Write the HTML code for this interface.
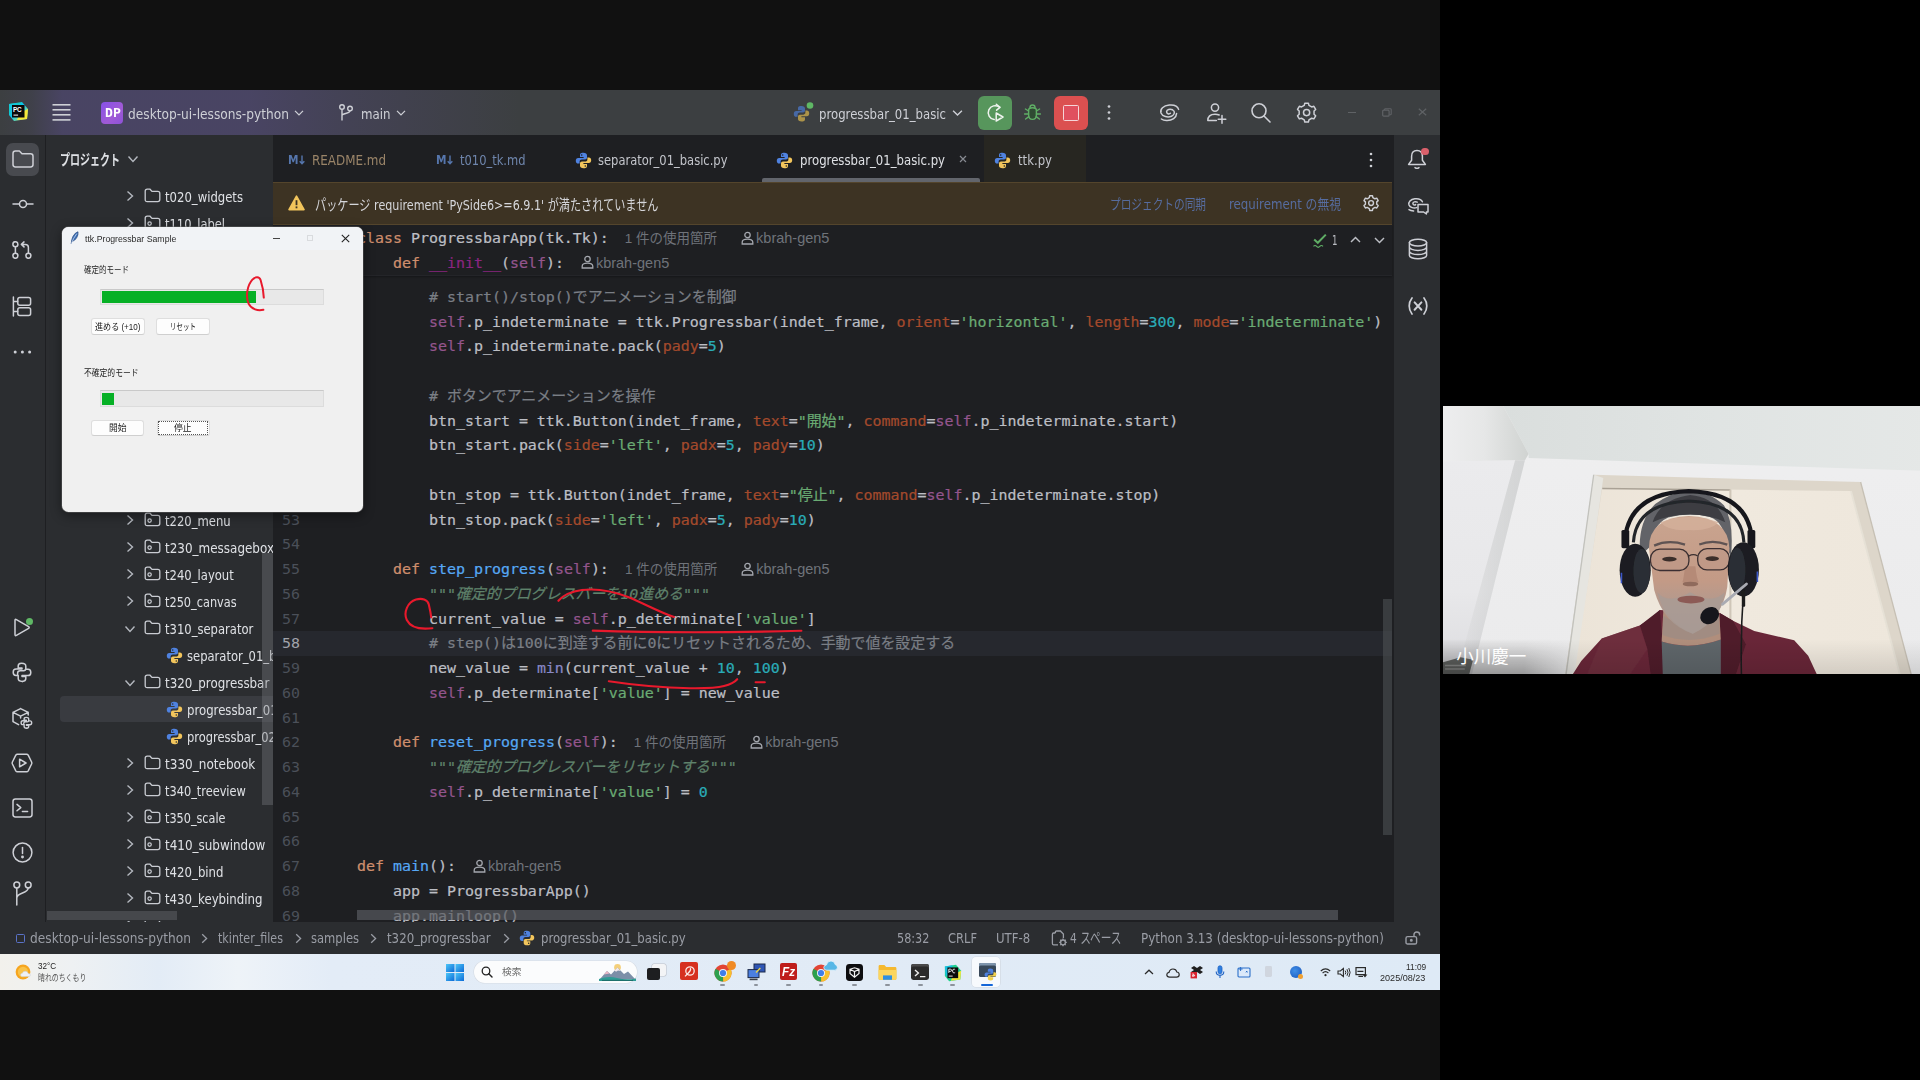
<!DOCTYPE html>
<html lang="ja">
<head>
<meta charset="utf-8">
<title>PyCharm - progressbar_01_basic.py</title>
<style>
html,body{margin:0;padding:0;background:#000;}
body{width:1920px;height:1080px;overflow:hidden;position:relative;font-family:"DejaVu Sans","Liberation Sans","Noto Sans CJK JP",sans-serif;color:#dfe1e5;font-size:14.5px;}
.a{position:absolute;}
.t{position:absolute;white-space:nowrap;line-height:20px;height:20px;}
#screen{position:absolute;left:0;top:90px;width:1440px;height:900px;overflow:hidden;background:#1e1f22;}
/* all children of #screen use coordinates relative to the screen (page y - 90) */
#titlebar{left:0;top:0;width:1440px;height:45px;background:#3c3f41;}
#titlegrad{left:0;top:0;width:520px;height:45px;background:linear-gradient(90deg,rgba(92,76,150,0) 0%,rgba(92,76,150,.1) 6%,rgba(92,76,150,.4) 12%,rgba(92,76,150,.4) 48%,rgba(92,76,150,.22) 68%,rgba(92,76,150,0) 100%);}
#lstripe{left:0;top:45px;width:45px;height:787px;background:#2b2d30;}
#proj{left:46px;top:45px;width:227px;height:787px;background:#2b2d30;overflow:hidden;}
#rstripe{left:1394px;top:45px;width:46px;height:787px;background:#2b2d30;}
#tabs{left:273px;top:45px;width:1121px;height:47px;background:#1e1f22;}
#banner{left:273px;top:92px;width:1119px;height:43px;background:#3d3323;}
#status{left:0;top:832px;width:1440px;height:32px;background:#2b2d30;}
#taskbar{left:0;top:864px;width:1440px;height:36px;background:linear-gradient(90deg,#f2f1ec 0%,#eef1f3 5%,#e3ecf6 11%,#eef3f8 16.5%,#e3ecf7 23%,#e1ebf6 60%,#deeaf6 100%);}
#editor{left:273px;top:135px;width:1119px;height:697px;overflow:hidden;}
#sticky{left:273px;top:135px;width:1119px;height:50px;background:#1e1f22;box-shadow:0 1px 2px rgba(0,0,0,.3);border-bottom:1px solid #242529;overflow:hidden;}
.cl{position:absolute;left:84px;white-space:pre;font-family:"DejaVu Sans Mono","Liberation Mono","Noto Sans CJK JP",monospace;font-size:14.95px;line-height:24.75px;height:24.75px;color:#bcbec4;-webkit-text-stroke:.22px currentColor;}
.ln{position:absolute;left:0;width:27px;text-align:right;font-family:"DejaVu Sans Mono","Liberation Mono",monospace;font-size:14.95px;line-height:24.75px;height:24.75px;color:#4b5059;}
.k{color:#cf8e6d}.f{color:#56a8f5}.s{color:#94558d}.g{color:#6aab73}.n{color:#2aacb8}.p{color:#a44a2c}.c{color:#7a7e85}.d{color:#5f826b;font-style:italic}.b{color:#8888c6}.m{color:#8a2580}
.h{-webkit-text-stroke:0;font-family:"Liberation Sans","Noto Sans CJK JP",sans-serif;font-size:13.5px;color:#6f737a;margin-left:16px;font-style:normal}
.an{font-size:14.5px}
.h svg{vertical-align:-1.5px;margin-right:2px}
.tr{font-size:14.5px;color:#dfe1e5;}

</style>
</head>
<body>
<div class="a" style="left:0;top:0;width:1440px;height:1080px;background:#111"></div>
<div id="screen">
  <div class="a" id="titlebar"></div>
  <div class="a" id="titlegrad"></div>
  <div class="a" id="lstripe"></div>
  <div class="a" id="proj">
<div class="a" style="left:14px;top:560.5px;width:214px;height:26.5px;background:#393b40;border-radius:4px 0 0 4px"></div>
<svg class="a" style="left:79px;top:54.5px" width="10" height="12" viewBox="0 0 10 12"><path d="M2.5 1.5 L7.5 6 L2.5 10.5" fill="none" stroke="#b4b8bf" stroke-width="1.4"/></svg>
<svg class="a" style="left:98px;top:53.4px" width="17" height="15" viewBox="0 0 17 15"><path d="M1.2 3.2 Q1.2 1.2 3.2 1.2 H6 L8 3.4 H13.8 Q15.8 3.4 15.8 5.4 V11.6 Q15.8 13.6 13.8 13.6 H3.2 Q1.2 13.6 1.2 11.6 Z" fill="none" stroke="#c9ccd2" stroke-width="1.3"/></svg>
<div class="t " style="left:119.2px;top:52.0px;font-size:14.5px;color:#dfe1e5;line-height:20px;height:20px;transform:scaleX(0.8035);transform-origin:0 50%;">t020_widgets</div>
<svg class="a" style="left:79px;top:81.5px" width="10" height="12" viewBox="0 0 10 12"><path d="M2.5 1.5 L7.5 6 L2.5 10.5" fill="none" stroke="#b4b8bf" stroke-width="1.4"/></svg>
<svg class="a" style="left:98px;top:80.4px" width="17" height="15" viewBox="0 0 17 15"><path d="M1.2 3.2 Q1.2 1.2 3.2 1.2 H6 L8 3.4 H13.8 Q15.8 3.4 15.8 5.4 V11.6 Q15.8 13.6 13.8 13.6 H3.2 Q1.2 13.6 1.2 11.6 Z" fill="none" stroke="#c9ccd2" stroke-width="1.3"/><circle cx="5.6" cy="8.6" r="1.7" fill="none" stroke="#c9ccd2" stroke-width="1.2"/></svg>
<div class="t " style="left:119.2px;top:79.0px;font-size:14.5px;color:#dfe1e5;line-height:20px;height:20px;transform:scaleX(0.7927);transform-origin:0 50%;">t110_label</div>
<svg class="a" style="left:79px;top:378.5px" width="10" height="12" viewBox="0 0 10 12"><path d="M2.5 1.5 L7.5 6 L2.5 10.5" fill="none" stroke="#b4b8bf" stroke-width="1.4"/></svg>
<svg class="a" style="left:98px;top:377.4px" width="17" height="15" viewBox="0 0 17 15"><path d="M1.2 3.2 Q1.2 1.2 3.2 1.2 H6 L8 3.4 H13.8 Q15.8 3.4 15.8 5.4 V11.6 Q15.8 13.6 13.8 13.6 H3.2 Q1.2 13.6 1.2 11.6 Z" fill="none" stroke="#c9ccd2" stroke-width="1.3"/><circle cx="5.6" cy="8.6" r="1.7" fill="none" stroke="#c9ccd2" stroke-width="1.2"/></svg>
<div class="t " style="left:119.2px;top:376.0px;font-size:14.5px;color:#dfe1e5;line-height:20px;height:20px;transform:scaleX(0.7995);transform-origin:0 50%;">t220_menu</div>
<svg class="a" style="left:79px;top:405.5px" width="10" height="12" viewBox="0 0 10 12"><path d="M2.5 1.5 L7.5 6 L2.5 10.5" fill="none" stroke="#b4b8bf" stroke-width="1.4"/></svg>
<svg class="a" style="left:98px;top:404.4px" width="17" height="15" viewBox="0 0 17 15"><path d="M1.2 3.2 Q1.2 1.2 3.2 1.2 H6 L8 3.4 H13.8 Q15.8 3.4 15.8 5.4 V11.6 Q15.8 13.6 13.8 13.6 H3.2 Q1.2 13.6 1.2 11.6 Z" fill="none" stroke="#c9ccd2" stroke-width="1.3"/><circle cx="5.6" cy="8.6" r="1.7" fill="none" stroke="#c9ccd2" stroke-width="1.2"/></svg>
<div class="t " style="left:119.2px;top:403.0px;font-size:14.5px;color:#dfe1e5;line-height:20px;height:20px;transform:scaleX(0.8258);transform-origin:0 50%;">t230_messagebox</div>
<svg class="a" style="left:79px;top:432.5px" width="10" height="12" viewBox="0 0 10 12"><path d="M2.5 1.5 L7.5 6 L2.5 10.5" fill="none" stroke="#b4b8bf" stroke-width="1.4"/></svg>
<svg class="a" style="left:98px;top:431.4px" width="17" height="15" viewBox="0 0 17 15"><path d="M1.2 3.2 Q1.2 1.2 3.2 1.2 H6 L8 3.4 H13.8 Q15.8 3.4 15.8 5.4 V11.6 Q15.8 13.6 13.8 13.6 H3.2 Q1.2 13.6 1.2 11.6 Z" fill="none" stroke="#c9ccd2" stroke-width="1.3"/><circle cx="5.6" cy="8.6" r="1.7" fill="none" stroke="#c9ccd2" stroke-width="1.2"/></svg>
<div class="t " style="left:119.2px;top:430.0px;font-size:14.5px;color:#dfe1e5;line-height:20px;height:20px;transform:scaleX(0.8013);transform-origin:0 50%;">t240_layout</div>
<svg class="a" style="left:79px;top:459.5px" width="10" height="12" viewBox="0 0 10 12"><path d="M2.5 1.5 L7.5 6 L2.5 10.5" fill="none" stroke="#b4b8bf" stroke-width="1.4"/></svg>
<svg class="a" style="left:98px;top:458.4px" width="17" height="15" viewBox="0 0 17 15"><path d="M1.2 3.2 Q1.2 1.2 3.2 1.2 H6 L8 3.4 H13.8 Q15.8 3.4 15.8 5.4 V11.6 Q15.8 13.6 13.8 13.6 H3.2 Q1.2 13.6 1.2 11.6 Z" fill="none" stroke="#c9ccd2" stroke-width="1.3"/><circle cx="5.6" cy="8.6" r="1.7" fill="none" stroke="#c9ccd2" stroke-width="1.2"/></svg>
<div class="t " style="left:119.2px;top:457.0px;font-size:14.5px;color:#dfe1e5;line-height:20px;height:20px;transform:scaleX(0.7809);transform-origin:0 50%;">t250_canvas</div>
<svg class="a" style="left:78px;top:489.0px" width="12" height="10" viewBox="0 0 12 10"><path d="M1.5 2.5 L6 7.5 L10.5 2.5" fill="none" stroke="#b4b8bf" stroke-width="1.4"/></svg>
<svg class="a" style="left:98px;top:485.4px" width="17" height="15" viewBox="0 0 17 15"><path d="M1.2 3.2 Q1.2 1.2 3.2 1.2 H6 L8 3.4 H13.8 Q15.8 3.4 15.8 5.4 V11.6 Q15.8 13.6 13.8 13.6 H3.2 Q1.2 13.6 1.2 11.6 Z" fill="none" stroke="#c9ccd2" stroke-width="1.3"/></svg>
<div class="t " style="left:119.2px;top:484.0px;font-size:14.5px;color:#dfe1e5;line-height:20px;height:20px;transform:scaleX(0.7988);transform-origin:0 50%;">t310_separator</div>
<svg class="a" style="left:120px;top:511.5px" width="17" height="17" viewBox="0 0 17 17"><path d="M8.3 0.8 C5.2 0.8 5 2.2 5 3.3 V5 H8.6 V5.9 H3.2 C1.6 5.9 0.8 7.2 0.8 8.7 C0.8 10.4 1.6 11.6 3.2 11.6 H4.6 V9.6 C4.6 8.3 5.6 7.4 6.9 7.4 H10 C11.2 7.4 12 6.6 12 5.4 V3.3 C12 1.8 10.8 0.8 8.3 0.8 Z" fill="#4f82e0"/><path d="M8.7 16.2 C11.8 16.2 12 14.8 12 13.7 V12 H8.4 V11.1 H13.8 C15.4 11.1 16.2 9.8 16.2 8.3 C16.2 6.6 15.4 5.4 13.8 5.4 H12.4 V7.4 C12.4 8.7 11.4 9.6 10.1 9.6 H7 C5.8 9.6 5 10.4 5 11.6 V13.7 C5 15.2 6.2 16.2 8.7 16.2 Z" fill="#f2c55c"/><circle cx="6.7" cy="3" r=".8" fill="#2b2d30"/><circle cx="10.3" cy="14" r=".8" fill="#2b2d30"/></svg>
<div class="t " style="left:140.8px;top:511.0px;font-size:14.5px;color:#dfe1e5;line-height:20px;height:20px;transform:scaleX(0.7979);transform-origin:0 50%;">separator_01_basic.py</div>
<svg class="a" style="left:78px;top:543.0px" width="12" height="10" viewBox="0 0 12 10"><path d="M1.5 2.5 L6 7.5 L10.5 2.5" fill="none" stroke="#b4b8bf" stroke-width="1.4"/></svg>
<svg class="a" style="left:98px;top:539.4px" width="17" height="15" viewBox="0 0 17 15"><path d="M1.2 3.2 Q1.2 1.2 3.2 1.2 H6 L8 3.4 H13.8 Q15.8 3.4 15.8 5.4 V11.6 Q15.8 13.6 13.8 13.6 H3.2 Q1.2 13.6 1.2 11.6 Z" fill="none" stroke="#c9ccd2" stroke-width="1.3"/></svg>
<div class="t " style="left:119.2px;top:538.0px;font-size:14.5px;color:#dfe1e5;line-height:20px;height:20px;transform:scaleX(0.8195);transform-origin:0 50%;">t320_progressbar</div>
<svg class="a" style="left:120px;top:565.5px" width="17" height="17" viewBox="0 0 17 17"><path d="M8.3 0.8 C5.2 0.8 5 2.2 5 3.3 V5 H8.6 V5.9 H3.2 C1.6 5.9 0.8 7.2 0.8 8.7 C0.8 10.4 1.6 11.6 3.2 11.6 H4.6 V9.6 C4.6 8.3 5.6 7.4 6.9 7.4 H10 C11.2 7.4 12 6.6 12 5.4 V3.3 C12 1.8 10.8 0.8 8.3 0.8 Z" fill="#4f82e0"/><path d="M8.7 16.2 C11.8 16.2 12 14.8 12 13.7 V12 H8.4 V11.1 H13.8 C15.4 11.1 16.2 9.8 16.2 8.3 C16.2 6.6 15.4 5.4 13.8 5.4 H12.4 V7.4 C12.4 8.7 11.4 9.6 10.1 9.6 H7 C5.8 9.6 5 10.4 5 11.6 V13.7 C5 15.2 6.2 16.2 8.7 16.2 Z" fill="#f2c55c"/><circle cx="6.7" cy="3" r=".8" fill="#2b2d30"/><circle cx="10.3" cy="14" r=".8" fill="#2b2d30"/></svg>
<div class="t " style="left:140.8px;top:565.0px;font-size:14.5px;color:#dfe1e5;line-height:20px;height:20px;transform:scaleX(0.8072);transform-origin:0 50%;">progressbar_01_basic.py</div>
<svg class="a" style="left:120px;top:592.5px" width="17" height="17" viewBox="0 0 17 17"><path d="M8.3 0.8 C5.2 0.8 5 2.2 5 3.3 V5 H8.6 V5.9 H3.2 C1.6 5.9 0.8 7.2 0.8 8.7 C0.8 10.4 1.6 11.6 3.2 11.6 H4.6 V9.6 C4.6 8.3 5.6 7.4 6.9 7.4 H10 C11.2 7.4 12 6.6 12 5.4 V3.3 C12 1.8 10.8 0.8 8.3 0.8 Z" fill="#4f82e0"/><path d="M8.7 16.2 C11.8 16.2 12 14.8 12 13.7 V12 H8.4 V11.1 H13.8 C15.4 11.1 16.2 9.8 16.2 8.3 C16.2 6.6 15.4 5.4 13.8 5.4 H12.4 V7.4 C12.4 8.7 11.4 9.6 10.1 9.6 H7 C5.8 9.6 5 10.4 5 11.6 V13.7 C5 15.2 6.2 16.2 8.7 16.2 Z" fill="#f2c55c"/><circle cx="6.7" cy="3" r=".8" fill="#2b2d30"/><circle cx="10.3" cy="14" r=".8" fill="#2b2d30"/></svg>
<div class="t " style="left:140.8px;top:592.0px;font-size:14.5px;color:#dfe1e5;line-height:20px;height:20px;transform:scaleX(0.7914);transform-origin:0 50%;">progressbar_02_thread.py</div>
<svg class="a" style="left:79px;top:621.5px" width="10" height="12" viewBox="0 0 10 12"><path d="M2.5 1.5 L7.5 6 L2.5 10.5" fill="none" stroke="#b4b8bf" stroke-width="1.4"/></svg>
<svg class="a" style="left:98px;top:620.4px" width="17" height="15" viewBox="0 0 17 15"><path d="M1.2 3.2 Q1.2 1.2 3.2 1.2 H6 L8 3.4 H13.8 Q15.8 3.4 15.8 5.4 V11.6 Q15.8 13.6 13.8 13.6 H3.2 Q1.2 13.6 1.2 11.6 Z" fill="none" stroke="#c9ccd2" stroke-width="1.3"/></svg>
<div class="t " style="left:119.2px;top:619.0px;font-size:14.5px;color:#dfe1e5;line-height:20px;height:20px;transform:scaleX(0.8313);transform-origin:0 50%;">t330_notebook</div>
<svg class="a" style="left:79px;top:648.5px" width="10" height="12" viewBox="0 0 10 12"><path d="M2.5 1.5 L7.5 6 L2.5 10.5" fill="none" stroke="#b4b8bf" stroke-width="1.4"/></svg>
<svg class="a" style="left:98px;top:647.4px" width="17" height="15" viewBox="0 0 17 15"><path d="M1.2 3.2 Q1.2 1.2 3.2 1.2 H6 L8 3.4 H13.8 Q15.8 3.4 15.8 5.4 V11.6 Q15.8 13.6 13.8 13.6 H3.2 Q1.2 13.6 1.2 11.6 Z" fill="none" stroke="#c9ccd2" stroke-width="1.3"/></svg>
<div class="t " style="left:119.2px;top:646.0px;font-size:14.5px;color:#dfe1e5;line-height:20px;height:20px;transform:scaleX(0.7832);transform-origin:0 50%;">t340_treeview</div>
<svg class="a" style="left:79px;top:675.5px" width="10" height="12" viewBox="0 0 10 12"><path d="M2.5 1.5 L7.5 6 L2.5 10.5" fill="none" stroke="#b4b8bf" stroke-width="1.4"/></svg>
<svg class="a" style="left:98px;top:674.4px" width="17" height="15" viewBox="0 0 17 15"><path d="M1.2 3.2 Q1.2 1.2 3.2 1.2 H6 L8 3.4 H13.8 Q15.8 3.4 15.8 5.4 V11.6 Q15.8 13.6 13.8 13.6 H3.2 Q1.2 13.6 1.2 11.6 Z" fill="none" stroke="#c9ccd2" stroke-width="1.3"/><circle cx="5.6" cy="8.6" r="1.7" fill="none" stroke="#c9ccd2" stroke-width="1.2"/></svg>
<div class="t " style="left:119.2px;top:673.0px;font-size:14.5px;color:#dfe1e5;line-height:20px;height:20px;transform:scaleX(0.7758);transform-origin:0 50%;">t350_scale</div>
<svg class="a" style="left:79px;top:702.5px" width="10" height="12" viewBox="0 0 10 12"><path d="M2.5 1.5 L7.5 6 L2.5 10.5" fill="none" stroke="#b4b8bf" stroke-width="1.4"/></svg>
<svg class="a" style="left:98px;top:701.4px" width="17" height="15" viewBox="0 0 17 15"><path d="M1.2 3.2 Q1.2 1.2 3.2 1.2 H6 L8 3.4 H13.8 Q15.8 3.4 15.8 5.4 V11.6 Q15.8 13.6 13.8 13.6 H3.2 Q1.2 13.6 1.2 11.6 Z" fill="none" stroke="#c9ccd2" stroke-width="1.3"/><circle cx="5.6" cy="8.6" r="1.7" fill="none" stroke="#c9ccd2" stroke-width="1.2"/></svg>
<div class="t " style="left:119.2px;top:700.0px;font-size:14.5px;color:#dfe1e5;line-height:20px;height:20px;transform:scaleX(0.8250);transform-origin:0 50%;">t410_subwindow</div>
<svg class="a" style="left:79px;top:729.5px" width="10" height="12" viewBox="0 0 10 12"><path d="M2.5 1.5 L7.5 6 L2.5 10.5" fill="none" stroke="#b4b8bf" stroke-width="1.4"/></svg>
<svg class="a" style="left:98px;top:728.4px" width="17" height="15" viewBox="0 0 17 15"><path d="M1.2 3.2 Q1.2 1.2 3.2 1.2 H6 L8 3.4 H13.8 Q15.8 3.4 15.8 5.4 V11.6 Q15.8 13.6 13.8 13.6 H3.2 Q1.2 13.6 1.2 11.6 Z" fill="none" stroke="#c9ccd2" stroke-width="1.3"/><circle cx="5.6" cy="8.6" r="1.7" fill="none" stroke="#c9ccd2" stroke-width="1.2"/></svg>
<div class="t " style="left:119.2px;top:727.0px;font-size:14.5px;color:#dfe1e5;line-height:20px;height:20px;transform:scaleX(0.8097);transform-origin:0 50%;">t420_bind</div>
<svg class="a" style="left:79px;top:756.5px" width="10" height="12" viewBox="0 0 10 12"><path d="M2.5 1.5 L7.5 6 L2.5 10.5" fill="none" stroke="#b4b8bf" stroke-width="1.4"/></svg>
<svg class="a" style="left:98px;top:755.4px" width="17" height="15" viewBox="0 0 17 15"><path d="M1.2 3.2 Q1.2 1.2 3.2 1.2 H6 L8 3.4 H13.8 Q15.8 3.4 15.8 5.4 V11.6 Q15.8 13.6 13.8 13.6 H3.2 Q1.2 13.6 1.2 11.6 Z" fill="none" stroke="#c9ccd2" stroke-width="1.3"/><circle cx="5.6" cy="8.6" r="1.7" fill="none" stroke="#c9ccd2" stroke-width="1.2"/></svg>
<div class="t " style="left:119.2px;top:754.0px;font-size:14.5px;color:#dfe1e5;line-height:20px;height:20px;transform:scaleX(0.8122);transform-origin:0 50%;">t430_keybinding</div>
<svg class="a" style="left:79px;top:783.5px" width="10" height="12" viewBox="0 0 10 12"><path d="M2.5 1.5 L7.5 6 L2.5 10.5" fill="none" stroke="#b4b8bf" stroke-width="1.4"/></svg>
<svg class="a" style="left:98px;top:782.4px" width="17" height="15" viewBox="0 0 17 15"><path d="M1.2 3.2 Q1.2 1.2 3.2 1.2 H6 L8 3.4 H13.8 Q15.8 3.4 15.8 5.4 V11.6 Q15.8 13.6 13.8 13.6 H3.2 Q1.2 13.6 1.2 11.6 Z" fill="none" stroke="#c9ccd2" stroke-width="1.3"/><circle cx="5.6" cy="8.6" r="1.7" fill="none" stroke="#c9ccd2" stroke-width="1.2"/></svg>
<div class="a" style="left:216px;top:418px;width:11px;height:252px;background:rgba(120,124,130,.38)"></div>
<div class="a" style="left:0;top:774px;width:227px;height:12px;background:#2b2d30"></div>
<div class="a" style="left:1px;top:776px;width:130px;height:9px;background:#46484c"></div>
<div class="a" style="left:0;top:0;width:227px;height:47px;background:#2b2d30"></div>
<div class="t " style="left:14.0px;top:14.7px;font-size:14.5px;color:#dfe1e5;line-height:20px;height:20px;font-weight:700;transform:scaleX(0.6897);transform-origin:0 50%;">プロジェクト</div>
<svg class="a" style="left:81px;top:19px" width="12" height="10" viewBox="0 0 12 10"><path d="M1.5 2.5 L6 7.5 L10.5 2.5" fill="none" stroke="#b4b8bf" stroke-width="1.4"/></svg>
</div>
  <div class="a" id="tabs"></div>
  <div class="a" id="banner"></div>
  <div class="a" id="rstripe"></div>
  <div class="a" id="editor">
<div class="a" style="left:0;top:406.33px;width:1119px;height:24.75px;background:#26282e"></div>
<div class="ln" style="top:59.82px">44</div>
<div class="cl" style="top:59.82px">        <span class="c"># start()/stop()でアニメーションを制御</span></div>
<div class="ln" style="top:84.57px">45</div>
<div class="cl" style="top:84.57px">        <span class="s">self</span>.p_indeterminate = ttk.Progressbar(indet_frame, <span class="p">orient</span>=<span class="g">'horizontal'</span>, <span class="p">length</span>=<span class="n">300</span>, <span class="p">mode</span>=<span class="g">'indeterminate'</span>)</div>
<div class="ln" style="top:109.32px">46</div>
<div class="cl" style="top:109.32px">        <span class="s">self</span>.p_indeterminate.pack(<span class="p">pady</span>=<span class="n">5</span>)</div>
<div class="ln" style="top:134.07px">47</div>
<div class="ln" style="top:158.82px">48</div>
<div class="cl" style="top:158.82px">        <span class="c"># ボタンでアニメーションを操作</span></div>
<div class="ln" style="top:183.57px">49</div>
<div class="cl" style="top:183.57px">        btn_start = ttk.Button(indet_frame, <span class="p">text</span>=<span class="g">"開始"</span>, <span class="p">command</span>=<span class="s">self</span>.p_indeterminate.start)</div>
<div class="ln" style="top:208.32px">50</div>
<div class="cl" style="top:208.32px">        btn_start.pack(<span class="p">side</span>=<span class="g">'left'</span>, <span class="p">padx</span>=<span class="n">5</span>, <span class="p">pady</span>=<span class="n">10</span>)</div>
<div class="ln" style="top:233.07px">51</div>
<div class="ln" style="top:257.82px">52</div>
<div class="cl" style="top:257.82px">        btn_stop = ttk.Button(indet_frame, <span class="p">text</span>=<span class="g">"停止"</span>, <span class="p">command</span>=<span class="s">self</span>.p_indeterminate.stop)</div>
<div class="ln" style="top:282.57px">53</div>
<div class="cl" style="top:282.57px">        btn_stop.pack(<span class="p">side</span>=<span class="g">'left'</span>, <span class="p">padx</span>=<span class="n">5</span>, <span class="p">pady</span>=<span class="n">10</span>)</div>
<div class="ln" style="top:307.32px">54</div>
<div class="ln" style="top:332.07px">55</div>
<div class="cl" style="top:332.07px">    <span class="k">def</span> <span class="f">step_progress</span>(<span class="s">self</span>):<span class="h">1 件の使用箇所</span><span class="h au" style="margin-left:24px"><svg class="ui" width="13" height="14" viewBox="0 0 13 14"><circle cx="6.5" cy="4" r="2.7" fill="none" stroke="#a4a7ae" stroke-width="1.3"/><path d="M1.2 13 V11.2 C1.2 8.8 3.4 8.2 6.5 8.2 S11.8 8.8 11.8 11.2 V13 Z" fill="none" stroke="#a4a7ae" stroke-width="1.3"/></svg><span class="an">kbrah-gen5</span></span></div>
<div class="ln" style="top:356.82px">56</div>
<div class="cl" style="top:356.82px">        <span class="d">"""確定的プログレスバーを10進める"""</span></div>
<div class="ln" style="top:381.58px">57</div>
<div class="cl" style="top:381.58px">        current_value = <span class="s">self</span>.p_determinate[<span class="g">'value'</span>]</div>
<div class="ln" style="top:406.33px;color:#a1a3ab">58</div>
<div class="cl" style="top:406.33px">        <span class="c"># step()は100に到達する前に0にリセットされるため、手動で値を設定する</span></div>
<div class="ln" style="top:431.08px">59</div>
<div class="cl" style="top:431.08px">        new_value = <span class="b">min</span>(current_value + <span class="n">10</span>, <span class="n">100</span>)</div>
<div class="ln" style="top:455.83px">60</div>
<div class="cl" style="top:455.83px">        <span class="s">self</span>.p_determinate[<span class="g">'value'</span>] = new_value</div>
<div class="ln" style="top:480.58px">61</div>
<div class="ln" style="top:505.33px">62</div>
<div class="cl" style="top:505.33px">    <span class="k">def</span> <span class="f">reset_progress</span>(<span class="s">self</span>):<span class="h">1 件の使用箇所</span><span class="h au" style="margin-left:24px"><svg class="ui" width="13" height="14" viewBox="0 0 13 14"><circle cx="6.5" cy="4" r="2.7" fill="none" stroke="#a4a7ae" stroke-width="1.3"/><path d="M1.2 13 V11.2 C1.2 8.8 3.4 8.2 6.5 8.2 S11.8 8.8 11.8 11.2 V13 Z" fill="none" stroke="#a4a7ae" stroke-width="1.3"/></svg><span class="an">kbrah-gen5</span></span></div>
<div class="ln" style="top:530.08px">63</div>
<div class="cl" style="top:530.08px">        <span class="d">"""確定的プログレスバーをリセットする"""</span></div>
<div class="ln" style="top:554.83px">64</div>
<div class="cl" style="top:554.83px">        <span class="s">self</span>.p_determinate[<span class="g">'value'</span>] = <span class="n">0</span></div>
<div class="ln" style="top:579.58px">65</div>
<div class="ln" style="top:604.33px">66</div>
<div class="ln" style="top:629.08px">67</div>
<div class="cl" style="top:629.08px"><span class="k">def</span> <span class="f">main</span>():<span class="h au" style="margin-left:17px"><svg class="ui" width="13" height="14" viewBox="0 0 13 14"><circle cx="6.5" cy="4" r="2.7" fill="none" stroke="#a4a7ae" stroke-width="1.3"/><path d="M1.2 13 V11.2 C1.2 8.8 3.4 8.2 6.5 8.2 S11.8 8.8 11.8 11.2 V13 Z" fill="none" stroke="#a4a7ae" stroke-width="1.3"/></svg><span class="an">kbrah-gen5</span></span></div>
<div class="ln" style="top:653.83px">68</div>
<div class="cl" style="top:653.83px">    app = ProgressbarApp()</div>
<div class="ln" style="top:678.58px">69</div>
<div class="cl" style="top:678.58px">    app.mainloop()</div>
<div class="a" style="left:84px;top:685.0px;width:981px;height:9.5px;background:rgba(86,89,94,.72)"></div>
<div class="a" style="left:1110px;top:374.0px;width:9px;height:236.0px;background:rgba(80,83,88,.55)"></div>
</div>
<div class="a" id="sticky">
<div class="cl" style="top:1.1px"><span class="k">class</span> ProgressbarApp(tk.Tk):<span class="h">1 件の使用箇所</span><span class="h au" style="margin-left:24px"><svg class="ui" width="13" height="14" viewBox="0 0 13 14"><circle cx="6.5" cy="4" r="2.7" fill="none" stroke="#a4a7ae" stroke-width="1.3"/><path d="M1.2 13 V11.2 C1.2 8.8 3.4 8.2 6.5 8.2 S11.8 8.8 11.8 11.2 V13 Z" fill="none" stroke="#a4a7ae" stroke-width="1.3"/></svg><span class="an">kbrah-gen5</span></span></div>
<div class="cl" style="top:25.8px">    <span class="k">def</span> <span class="m">__init__</span>(<span class="s">self</span>):<span class="h au" style="margin-left:17px"><svg class="ui" width="13" height="14" viewBox="0 0 13 14"><circle cx="6.5" cy="4" r="2.7" fill="none" stroke="#a4a7ae" stroke-width="1.3"/><path d="M1.2 13 V11.2 C1.2 8.8 3.4 8.2 6.5 8.2 S11.8 8.8 11.8 11.2 V13 Z" fill="none" stroke="#a4a7ae" stroke-width="1.3"/></svg><span class="an">kbrah-gen5</span></span></div>
</div>
  <svg class="a" style="left:8px;top:11px" width="21" height="21" viewBox="0 0 21 21"><defs><linearGradient id="pcg" x1="0" y1="0" x2="1" y2="1"><stop offset="0" stop-color="#21d789"/><stop offset=".45" stop-color="#07c3f2"/><stop offset="1" stop-color="#fcf84a"/></linearGradient></defs><path d="M1 3 L14 1 L20 8 L19 18 L6 20 L1 14 Z" fill="url(#pcg)"/><path d="M12 12 L20 8 L19 18 L9 19 Z" fill="#f6e83a"/><path d="M1 3 L9 2 L8 12 L2 14Z" fill="#14c6dc"/><rect x="4" y="4" width="12.5" height="12.5" fill="#0b0b0b"/><rect x="5.5" y="13.6" width="4.6" height="1" fill="#fff"/><text x="5.1" y="11" font-family="'Liberation Sans',sans-serif" font-size="6.4" font-weight="700" fill="#fff" letter-spacing="-.3">PC</text></svg>
<svg class="a" style="left:52px;top:13px" width="19" height="19" viewBox="0 0 19 19"><rect x="0.5" y="1.00" width="18" height="1.6" fill="#ced0d6"/><rect x="0.5" y="6.00" width="18" height="1.6" fill="#ced0d6"/><rect x="0.5" y="11.00" width="18" height="1.6" fill="#ced0d6"/><rect x="0.5" y="16.10" width="18" height="1.6" fill="#ced0d6"/></svg>
<div class="a" style="left:101px;top:11.5px;width:22px;height:22px;border-radius:4px;background:linear-gradient(135deg,#8652e8,#a05ad6 60%,#8d52d8)"></div>
<div class="t " style="left:104.6px;top:12.8px;font-size:12.5px;color:#ffffff;line-height:20px;height:20px;font-weight:700;font-family:'DejaVu Sans Mono','Liberation Mono',monospace;transform:scaleX(1.0490);transform-origin:0 50%;">DP</div>
<div class="t " style="left:128.0px;top:13.6px;font-size:14.5px;color:#ced0d6;line-height:20px;height:20px;transform:scaleX(0.8422);transform-origin:0 50%;">desktop-ui-lessons-python</div>
<svg class="a" style="left:294.0px;top:19.0px" width="10" height="8" viewBox="0 0 12 8"><path d="M1.2 1.5 L6 6.3 L10.8 1.5" fill="none" stroke="#ced0d6" stroke-width="1.5"/></svg>
<svg class="a" style="left:338px;top:13px" width="16" height="19" viewBox="0 0 16 19"><circle cx="4" cy="4" r="2.3" fill="none" stroke="#ced0d6" stroke-width="1.4"/><circle cx="12" cy="5.5" r="2.3" fill="none" stroke="#ced0d6" stroke-width="1.4"/><path d="M4 6.3 V17.5 M4 12.5 C4 10 12 11 12 7.8" fill="none" stroke="#ced0d6" stroke-width="1.4"/></svg>
<div class="t " style="left:361.0px;top:13.6px;font-size:14.5px;color:#ced0d6;line-height:20px;height:20px;transform:scaleX(0.8141);transform-origin:0 50%;">main</div>
<svg class="a" style="left:396.0px;top:19.0px" width="10" height="8" viewBox="0 0 12 8"><path d="M1.2 1.5 L6 6.3 L10.8 1.5" fill="none" stroke="#ced0d6" stroke-width="1.5"/></svg>
<svg class="a" style="left:792px;top:11px" width="23" height="24" viewBox="0 0 23 24"><g opacity=".8"><path d="M9.3 5 C6.2 5 6 6.4 6 7.5 V9.2 H9.6 V10.1 H4.2 C2.6 10.1 1.8 11.4 1.8 12.9 C1.8 14.6 2.6 15.8 4.2 15.8 H5.6 V13.8 C5.6 12.5 6.6 11.6 7.9 11.6 H11 C12.2 11.6 13 10.8 13 9.6 V7.5 C13 6 11.8 5 9.3 5 Z" fill="#4a74c0"/><path d="M9.7 20.4 C12.8 20.4 13 19 13 17.9 V16.2 H9.4 V15.3 H14.8 C16.4 15.3 17.2 14 17.2 12.5 C17.2 10.8 16.4 9.6 14.8 9.6 H13.4 V11.6 C13.4 12.9 12.4 13.8 11.1 13.8 H8 C6.8 13.8 6 14.6 6 15.8 V17.9 C6 19.4 7.2 20.4 9.7 20.4 Z" fill="#c9a94c"/></g><circle cx="18" cy="4.5" r="3.3" fill="#5fb865"/></svg>
<div class="t " style="left:819.4px;top:13.6px;font-size:14.5px;color:#ced0d6;line-height:20px;height:20px;transform:scaleX(0.8076);transform-origin:0 50%;">progressbar_01_basic</div>
<svg class="a" style="left:952.0px;top:19.0px" width="11" height="8" viewBox="0 0 12 8"><path d="M1.2 1.5 L6 6.3 L10.8 1.5" fill="none" stroke="#ced0d6" stroke-width="1.5"/></svg>
<div class="a" style="left:978px;top:6px;width:34px;height:34px;border-radius:6px;background:#57965c"></div>
<svg class="a" style="left:984px;top:12px" width="22" height="22" viewBox="0 0 22 22"><path d="M15.6 5.2 A7 7 0 1 0 10.2 17.6" fill="none" stroke="#eef3ee" stroke-width="1.5" stroke-linecap="round"/><path d="M12.3 2.2 L16 5.4 L12.6 8.2" fill="none" stroke="#eef3ee" stroke-width="1.5" stroke-linecap="round" stroke-linejoin="round"/><path d="M12.2 11 L19 15 L12.2 19 Z" fill="none" stroke="#eef3ee" stroke-width="1.5" stroke-linejoin="round"/></svg>
<svg class="a" style="left:1023px;top:13px" width="19" height="19" viewBox="0 0 19 19"><path d="M5.6 7.2 Q5.6 4.8 9.5 4.8 Q13.4 4.8 13.4 7.2 V11.8 Q13.4 16.4 9.5 16.4 Q5.6 16.4 5.6 11.8 Z" fill="#2f4a33" stroke="#5fad65" stroke-width="1.4"/><path d="M7 4.6 Q7 2 9.5 2 Q12 2 12 4.6 M5.6 8 L2.4 6 M5.6 11 H1.6 M5.8 13.6 L2.6 16 M13.4 8 L16.6 6 M13.4 11 H17.4 M13.2 13.6 L16.4 16" fill="none" stroke="#5fad65" stroke-width="1.4" stroke-linecap="round"/></svg>
<div class="a" style="left:1054px;top:6px;width:34px;height:34px;border-radius:6px;background:#db5050"></div>
<div class="a" style="left:1062.5px;top:14.5px;width:14px;height:14px;border:1.6px solid #f5d5d8;border-radius:1.5px;background:#e0505f"></div>
<svg class="a" style="left:1106px;top:13px" width="6" height="19" viewBox="0 0 6 19"><circle cx="3" cy="3.5" r="1.35" fill="#ced0d6"/><circle cx="3" cy="9.5" r="1.35" fill="#ced0d6"/><circle cx="3" cy="15.5" r="1.35" fill="#ced0d6"/></svg>
<svg class="a" style="left:1159px;top:12.5px" width="21" height="20" viewBox="0 0 21 20"><path d="M11.4 10.3 C10 11.6 7.4 10.6 7.6 8.6 C7.8 6.6 11 5.6 13.6 6.8 C16.4 8.2 15.8 11.8 12.6 13.2 C8.8 14.8 3.4 13.6 2 10 C0.8 6.2 4.4 2.6 10.2 2 C14.6 1.6 18.6 3 19.6 6.4 M17.6 10.4 C17.4 14.6 13.2 17.8 7.6 17.6 C5.4 17.5 3.6 16.9 2.4 16" fill="none" stroke="#ced0d6" stroke-width="1.5" stroke-linecap="round"/></svg>
<svg class="a" style="left:1206px;top:11.5px" width="22" height="23" viewBox="0 0 22 23"><circle cx="9" cy="5.6" r="3.6" fill="none" stroke="#ced0d6" stroke-width="1.5"/><path d="M1.8 18.6 C1.8 13.6 5 12.2 9 12.2 C10.6 12.2 12 12.5 13.2 13 M1.8 18.6 H10.4 M16 13.4 V21.2 M12.2 17.3 H19.8" fill="none" stroke="#ced0d6" stroke-width="1.5" stroke-linecap="round"/></svg>
<svg class="a" style="left:1250px;top:12px" width="22" height="22" viewBox="0 0 22 22"><circle cx="9" cy="8.8" r="7" fill="none" stroke="#ced0d6" stroke-width="1.6"/><path d="M14 14 L20 20" stroke="#ced0d6" stroke-width="1.6" stroke-linecap="round"/></svg>
<svg class="a" style="left:1295px;top:11px" width="23" height="23" viewBox="0 0 23 23"><path d="M9.25 4.37 L9.80 2.17 L13.40 2.17 L13.95 4.37 L16.69 5.95 L18.87 5.33 L20.67 8.44 L19.03 10.02 L19.03 13.18 L20.67 14.76 L18.87 17.87 L16.69 17.25 L13.95 18.83 L13.40 21.03 L9.80 21.03 L9.25 18.83 L6.51 17.25 L4.33 17.87 L2.53 14.76 L4.17 13.18 L4.17 10.02 L2.53 8.44 L4.33 5.33 L6.51 5.95 Z" fill="none" stroke="#ced0d6" stroke-width="1.5" stroke-linejoin="round"/><circle cx="11.6" cy="11.6" r="3.1" fill="none" stroke="#ced0d6" stroke-width="1.5"/></svg>
<div class="a" style="left:1347.5px;top:22px;width:8px;height:1.3px;background:#5f6265"></div>
<svg class="a" style="left:1382px;top:18px" width="10" height="9" viewBox="0 0 10 9"><rect x=".7" y="2.2" width="6.4" height="6" rx="1" fill="none" stroke="#5f6265" stroke-width="1.2"/><path d="M2.6 2 V1.4 Q2.6 .7 3.4 .7 H8.4 Q9.2 .7 9.2 1.5 V6 Q9.2 6.7 8.4 6.7 H7.4" fill="none" stroke="#5f6265" stroke-width="1.1"/></svg>
<svg class="a" style="left:1417.5px;top:18px" width="9" height="8" viewBox="0 0 9 8"><path d="M.8 .8 L8.2 7.2 M8.2 .8 L.8 7.2" stroke="#5f6265" stroke-width="1.2"/></svg>
  <div class="a" style="left:984px;top:45px;width:102px;height:47px;background:#272621"></div>
<div class="t " style="left:287.5px;top:59.5px;font-size:12px;color:#5676ad;line-height:20px;height:20px;font-weight:700;transform:scaleX(0.8784);transform-origin:0 50%;">M</div><svg class="a" style="left:299.0px;top:64.5px" width="6" height="10" viewBox="0 0 6 10"><path d="M3 .5 V8.6 M.7 6.2 L3 8.8 L5.3 6.2" fill="none" stroke="#5676ad" stroke-width="1.4"/></svg>
<div class="t " style="left:312.0px;top:60.3px;font-size:14.5px;color:#9a8468;line-height:20px;height:20px;transform:scaleX(0.8228);transform-origin:0 50%;">README.md</div>
<div class="t " style="left:435.5px;top:59.5px;font-size:12px;color:#5676ad;line-height:20px;height:20px;font-weight:700;transform:scaleX(0.8784);transform-origin:0 50%;">M</div><svg class="a" style="left:447.0px;top:64.5px" width="6" height="10" viewBox="0 0 6 10"><path d="M3 .5 V8.6 M.7 6.2 L3 8.8 L5.3 6.2" fill="none" stroke="#5676ad" stroke-width="1.4"/></svg>
<div class="t " style="left:459.5px;top:60.3px;font-size:14.5px;color:#6f86ad;line-height:20px;height:20px;transform:scaleX(0.7926);transform-origin:0 50%;">t010_tk.md</div>
<svg class="a" style="left:574.5px;top:61.5px;opacity:1" width="17" height="17" viewBox="0 0 17 17"><path d="M8.3 0.8 C5.2 0.8 5 2.2 5 3.3 V5 H8.6 V5.9 H3.2 C1.6 5.9 0.8 7.2 0.8 8.7 C0.8 10.4 1.6 11.6 3.2 11.6 H4.6 V9.6 C4.6 8.3 5.6 7.4 6.9 7.4 H10 C11.2 7.4 12 6.6 12 5.4 V3.3 C12 1.8 10.8 0.8 8.3 0.8 Z" fill="#4f82e0"/><path d="M8.7 16.2 C11.8 16.2 12 14.8 12 13.7 V12 H8.4 V11.1 H13.8 C15.4 11.1 16.2 9.8 16.2 8.3 C16.2 6.6 15.4 5.4 13.8 5.4 H12.4 V7.4 C12.4 8.7 11.4 9.6 10.1 9.6 H7 C5.8 9.6 5 10.4 5 11.6 V13.7 C5 15.2 6.2 16.2 8.7 16.2 Z" fill="#f2c55c"/><circle cx="6.7" cy="3" r=".8" fill="#1e1f22"/><circle cx="10.3" cy="14" r=".8" fill="#1e1f22"/></svg>
<div class="t " style="left:598.0px;top:60.3px;font-size:14.5px;color:#c3c5cb;line-height:20px;height:20px;transform:scaleX(0.7949);transform-origin:0 50%;">separator_01_basic.py</div>
<svg class="a" style="left:776.0px;top:61.5px;opacity:1" width="17" height="17" viewBox="0 0 17 17"><path d="M8.3 0.8 C5.2 0.8 5 2.2 5 3.3 V5 H8.6 V5.9 H3.2 C1.6 5.9 0.8 7.2 0.8 8.7 C0.8 10.4 1.6 11.6 3.2 11.6 H4.6 V9.6 C4.6 8.3 5.6 7.4 6.9 7.4 H10 C11.2 7.4 12 6.6 12 5.4 V3.3 C12 1.8 10.8 0.8 8.3 0.8 Z" fill="#4f82e0"/><path d="M8.7 16.2 C11.8 16.2 12 14.8 12 13.7 V12 H8.4 V11.1 H13.8 C15.4 11.1 16.2 9.8 16.2 8.3 C16.2 6.6 15.4 5.4 13.8 5.4 H12.4 V7.4 C12.4 8.7 11.4 9.6 10.1 9.6 H7 C5.8 9.6 5 10.4 5 11.6 V13.7 C5 15.2 6.2 16.2 8.7 16.2 Z" fill="#f2c55c"/><circle cx="6.7" cy="3" r=".8" fill="#1e1f22"/><circle cx="10.3" cy="14" r=".8" fill="#1e1f22"/></svg>
<div class="t " style="left:800.0px;top:60.3px;font-size:14.5px;color:#dfe1e5;line-height:20px;height:20px;transform:scaleX(0.8072);transform-origin:0 50%;">progressbar_01_basic.py</div>
<svg class="a" style="left:958.5px;top:65.0px" width="8" height="8" viewBox="0 0 8 8"><path d="M1 1 L7 7 M7 1 L1 7" stroke="#868a91" stroke-width="1.2"/></svg>
<div class="a" style="left:762px;top:88px;width:218px;height:4px;background:#62656c;border-radius:2px 2px 0 0"></div>
<svg class="a" style="left:994.0px;top:61.5px;opacity:1" width="17" height="17" viewBox="0 0 17 17"><path d="M8.3 0.8 C5.2 0.8 5 2.2 5 3.3 V5 H8.6 V5.9 H3.2 C1.6 5.9 0.8 7.2 0.8 8.7 C0.8 10.4 1.6 11.6 3.2 11.6 H4.6 V9.6 C4.6 8.3 5.6 7.4 6.9 7.4 H10 C11.2 7.4 12 6.6 12 5.4 V3.3 C12 1.8 10.8 0.8 8.3 0.8 Z" fill="#4f82e0"/><path d="M8.7 16.2 C11.8 16.2 12 14.8 12 13.7 V12 H8.4 V11.1 H13.8 C15.4 11.1 16.2 9.8 16.2 8.3 C16.2 6.6 15.4 5.4 13.8 5.4 H12.4 V7.4 C12.4 8.7 11.4 9.6 10.1 9.6 H7 C5.8 9.6 5 10.4 5 11.6 V13.7 C5 15.2 6.2 16.2 8.7 16.2 Z" fill="#f2c55c"/><circle cx="6.7" cy="3" r=".8" fill="#1e1f22"/><circle cx="10.3" cy="14" r=".8" fill="#1e1f22"/></svg>
<div class="t " style="left:1017.5px;top:60.3px;font-size:14.5px;color:#c3c5cb;line-height:20px;height:20px;transform:scaleX(0.8062);transform-origin:0 50%;">ttk.py</div>
<svg class="a" style="left:1368.2px;top:60.5px" width="6" height="18" viewBox="0 0 6 18"><circle cx="3" cy="3.0" r="1.3" fill="#ced0d6"/><circle cx="3" cy="9.0" r="1.3" fill="#ced0d6"/><circle cx="3" cy="15.0" r="1.3" fill="#ced0d6"/></svg>
<div class="a" style="left:273px;top:92px;width:1119px;height:1px;background:#54452c"></div>
<div class="a" style="left:273px;top:134px;width:1119px;height:1px;background:#54452c"></div>
<svg class="a" style="left:288px;top:104.7px" width="17" height="16" viewBox="0 0 17 16"><path d="M8.5 1.2 L16 14.6 H1 Z" fill="#f2c55c" stroke="#f2c55c" stroke-width="1.6" stroke-linejoin="round"/><rect x="7.6" y="5.2" width="1.8" height="5" fill="#3d3323"/><rect x="7.6" y="11.4" width="1.8" height="1.9" fill="#3d3323"/></svg>
<div class="t " style="left:314.5px;top:104.5px;font-size:14.5px;color:#d5d6da;line-height:20px;height:20px;transform:scaleX(0.7689);transform-origin:0 50%;">パッケージ requirement &#x27;PySide6&gt;=6.9.1&#x27; が満たされていません</div>
<div class="t " style="left:1110.0px;top:104.3px;font-size:14px;color:#566c9f;line-height:20px;height:20px;transform:scaleX(0.7619);transform-origin:0 50%;">プロジェクトの同期</div>
<div class="t " style="left:1229.0px;top:104.3px;font-size:14px;color:#566c9f;line-height:20px;height:20px;transform:scaleX(0.8431);transform-origin:0 50%;">requirement の無視</div>
<svg class="a" style="left:1362px;top:104.2px" width="18" height="18" viewBox="0 0 23 23"><path d="M9.31 4.56 L9.80 2.17 L13.40 2.17 L13.89 4.56 L16.55 6.10 L18.87 5.33 L20.67 8.44 L18.84 10.06 L18.84 13.14 L20.67 14.76 L18.87 17.87 L16.55 17.10 L13.89 18.64 L13.40 21.03 L9.80 21.03 L9.31 18.64 L6.65 17.10 L4.33 17.87 L2.53 14.76 L4.36 13.14 L4.36 10.06 L2.53 8.44 L4.33 5.33 L6.65 6.10 Z" fill="none" stroke="#ced0d6" stroke-width="1.8" stroke-linejoin="round"/><circle cx="11.6" cy="11.6" r="3.1" fill="none" stroke="#ced0d6" stroke-width="1.8"/></svg>
<svg class="a" style="left:1312px;top:142.5px" width="16" height="16" viewBox="0 0 16 16"><path d="M2.2 6.4 L5.8 9.8 L13.8 1.6" fill="none" stroke="#5fad65" stroke-width="2"/><path d="M1.5 13.4 Q3 11.6 4.6 13.4 T7.8 13.4 T11 13.4" fill="none" stroke="#5fad65" stroke-width="1.2"/></svg>
<div class="t " style="left:1331.5px;top:140.3px;font-size:14px;color:#bcbec4;line-height:20px;height:20px;transform:scaleX(0.6165);transform-origin:0 50%;">1</div>
<svg class="a" style="left:1350px;top:146.0px" width="11" height="7" viewBox="0 0 11 7"><path d="M1 6 L5.5 1.4 L10 6" fill="none" stroke="#bcbec4" stroke-width="1.4"/></svg>
<svg class="a" style="left:1374px;top:146.8px" width="11" height="7" viewBox="0 0 11 7"><path d="M1 1 L5.5 5.6 L10 1" fill="none" stroke="#bcbec4" stroke-width="1.4"/></svg>
  <div class="a" style="left:6px;top:52.6px;width:33px;height:33px;border-radius:7px;background:#484a4f"></div>
<svg class="a" style="left:11.5px;top:59.8px" width="22" height="18" viewBox="0 0 22 18" fill="none" stroke="#ced0d6" stroke-width="1.5" stroke-linecap="round" stroke-linejoin="round"><path d="M1 3.4 Q1 1 3.4 1 H7.4 L10 3.8 H18.6 Q21 3.8 21 6.2 V14.6 Q21 17 18.6 17 H3.4 Q1 17 1 14.6 Z"/></svg>
<svg class="a" style="left:11.6px;top:109.3px" width="22" height="10" viewBox="0 0 22 10" fill="none" stroke="#ced0d6" stroke-width="1.5" stroke-linecap="round" stroke-linejoin="round"><circle cx="11" cy="5" r="3.5"/><path d="M1 5 H7.4 M14.6 5 H21"/></svg>
<svg class="a" style="left:12.4px;top:150.5px" width="20" height="18" viewBox="0 0 20 18" fill="none" stroke="#ced0d6" stroke-width="1.5" stroke-linecap="round" stroke-linejoin="round"><circle cx="3.4" cy="3.2" r="2.5"/><circle cx="3.4" cy="14.8" r="2.5"/><circle cx="16.4" cy="14.8" r="2.5"/><path d="M3.4 5.8 V12.2 M16.4 12.2 V6.4 Q16.4 3.4 13.4 3.4 H9.6 M12 .9 L9.4 3.4 L12 5.9"/></svg>
<svg class="a" style="left:12.4px;top:206.3px" width="20" height="21" viewBox="0 0 20 21" fill="none" stroke="#ced0d6" stroke-width="1.5" stroke-linecap="round" stroke-linejoin="round"><path d="M1.4 1 V20 M1.4 5.4 H5.6 M1.4 15.6 H5.6"/><rect x="5.8" y="1.6" width="12.8" height="7.6" rx="2"/><rect x="5.8" y="11.8" width="12.8" height="7.6" rx="2"/></svg>
<svg class="a" style="left:13px;top:259.7px" width="19" height="4" viewBox="0 0 19 4"><circle cx="2.2" cy="2" r="1.5" fill="#ced0d6"/><circle cx="9.4" cy="2" r="1.5" fill="#ced0d6"/><circle cx="16.6" cy="2" r="1.5" fill="#ced0d6"/></svg>
<svg class="a" style="left:13.0px;top:527.8px" width="18" height="19" viewBox="0 0 18 19" fill="none" stroke="#ced0d6" stroke-width="1.5" stroke-linecap="round" stroke-linejoin="round"><path d="M2 2.4 Q2 .8 3.4 1.6 L15.6 8.6 Q16.8 9.5 15.6 10.4 L3.4 17.4 Q2 18.2 2 16.6 Z"/></svg>
<div class="a" style="left:26px;top:527.5px;width:7.4px;height:7.4px;border-radius:50%;background:#5fb865"></div>
<svg class="a" style="left:12.0px;top:571.8px" width="20" height="21" viewBox="0 0 20 21" fill="none" stroke="#ced0d6" stroke-width="1.5" stroke-linecap="round" stroke-linejoin="round"><path d="M9.6 1.2 C6.4 1.2 6.2 2.8 6.2 4 V6 H10 V7 H4 C2.2 7 1.2 8.4 1.2 10.2 C1.2 12 2.2 13.4 4 13.4 H5.6 V11.2 C5.6 9.8 6.8 8.8 8.2 8.8 H11.6 C12.8 8.8 13.8 7.8 13.8 6.6 V4 C13.8 2.4 12.4 1.2 9.6 1.2 Z"/><path d="M10.4 19.4 C13.6 19.4 13.8 17.8 13.8 16.6 V14.6 H10 V13.6 H16 C17.8 13.6 18.8 12.2 18.8 10.4 C18.8 8.6 17.8 7.2 16 7.2 H14.4"/><path d="M6.2 13.6 V16.6 C6.2 18.2 7.6 19.4 10.4 19.4"/></svg>
<svg class="a" style="left:11.4px;top:616.5px" width="22" height="22" viewBox="0 0 22 22" fill="none" stroke="#ced0d6" stroke-width="1.5" stroke-linecap="round" stroke-linejoin="round"><path d="M9.6 1.6 L2 5.4 V14.6 L7.6 17.6 M9.6 1.6 L17.2 5.4 V8 M2 5.4 L9.6 9.2 L17.2 5.4 M9.6 9.2 V11"/><g transform="translate(9.4,9.6) scale(.6)" stroke-width="2.3"><path d="M9.6 1.2 C6.4 1.2 6.2 2.8 6.2 4 V6 H10 V7 H4 C2.2 7 1.2 8.4 1.2 10.2 C1.2 12 2.2 13.4 4 13.4 H5.6 V11.2 C5.6 9.8 6.8 8.8 8.2 8.8 H11.6 C12.8 8.8 13.8 7.8 13.8 6.6 V4 C13.8 2.4 12.4 1.2 9.6 1.2 Z"/><path d="M10.4 19.4 C13.6 19.4 13.8 17.8 13.8 16.6 V14.6 H10 V13.6 H16 C17.8 13.6 18.8 12.2 18.8 10.4 C18.8 8.6 17.8 7.2 16 7.2 H14.4"/><path d="M6.2 13.6 V16.6 C6.2 18.2 7.6 19.4 10.4 19.4"/></g></svg>
<svg class="a" style="left:11.0px;top:662.6px" width="22" height="20" viewBox="0 0 22 20" fill="none" stroke="#ced0d6" stroke-width="1.5" stroke-linecap="round" stroke-linejoin="round"><path d="M6.4 1.2 H15.6 Q16.6 1.2 17.2 2.2 L20.6 9 Q21 10 20.6 11 L17.2 17.8 Q16.6 18.8 15.6 18.8 H6.4 Q5.4 18.8 4.8 17.8 L1.4 11 Q1 10 1.4 9 L4.8 2.2 Q5.4 1.2 6.4 1.2 Z"/><path d="M8.6 6.2 L15 10 L8.6 13.8 Z"/></svg>
<svg class="a" style="left:12.0px;top:708.2px" width="21" height="20" viewBox="0 0 21 20" fill="none" stroke="#ced0d6" stroke-width="1.5" stroke-linecap="round" stroke-linejoin="round"><rect x="1" y="1" width="19" height="18" rx="2.4"/><path d="M5 6.4 L8.8 9.6 L5 12.8 M10.4 13.4 H15.6"/></svg>
<svg class="a" style="left:12.0px;top:751.9px" width="21" height="21" viewBox="0 0 21 21" fill="none" stroke="#ced0d6" stroke-width="1.5" stroke-linecap="round" stroke-linejoin="round"><circle cx="10.5" cy="10.5" r="9.4"/><path d="M10.5 5.4 V11.6"/><circle cx="10.5" cy="15" r=".7" fill="#ced0d6"/></svg>
<svg class="a" style="left:12.7px;top:791.3px" width="19" height="25" viewBox="0 0 19 25" fill="none" stroke="#ced0d6" stroke-width="1.5" stroke-linecap="round" stroke-linejoin="round"><circle cx="3.8" cy="4" r="2.9"/><circle cx="15.2" cy="4" r="2.9"/><path d="M3.8 7 V24 M15.2 7 C15.2 12.6 3.8 11.4 3.8 17"/></svg>
<svg class="a" style="left:1407.2px;top:58.9px" width="20" height="21" viewBox="0 0 20 21" fill="none" stroke="#ced0d6" stroke-width="1.5" stroke-linecap="round" stroke-linejoin="round"><path d="M10 1.4 C6.4 1.4 4.6 4 4.6 7.2 V11.2 L1.6 15.4 H18.4 L15.4 11.2 V7.2 C15.4 4 13.6 1.4 10 1.4 Z"/><path d="M8 18.6 Q10 20 12 18.6"/></svg>
<div class="a" style="left:1421.4px;top:58.1px;width:7.4px;height:7.4px;border-radius:50%;background:#d9606b"></div>
<svg class="a" style="left:1407.1px;top:105.2px" width="23" height="20" viewBox="0 0 23 20" fill="none" stroke="#ced0d6" stroke-width="1.5" stroke-linecap="round" stroke-linejoin="round"><path d="M8.6 9.6 C7.6 10.6 5.8 9.8 5.9 8.4 C6 7 8.4 6.2 10.2 7.2 M9.6 12.6 C6.8 13.6 3 12.6 2 10 C1 7.2 3.6 4.4 7.8 3.8 C11.4 3.4 14.4 4.4 15.4 6.8 M2 14.6 C2.8 15.2 4.2 15.8 6.6 16"/><path d="M11 9.6 H21 V17 H19.4 V19 L16.6 17 H11 Z"/></svg>
<svg class="a" style="left:1407.6px;top:147.6px" width="20" height="22" viewBox="0 0 20 22" fill="none" stroke="#ced0d6" stroke-width="1.5" stroke-linecap="round" stroke-linejoin="round"><ellipse cx="10" cy="4.6" rx="8.6" ry="3.4"/><path d="M1.4 4.6 V17.4 C1.4 19.2 5.2 20.8 10 20.8 S18.6 19.2 18.6 17.4 V4.6 M1.4 9 C1.4 10.8 5.2 12.4 10 12.4 S18.6 10.8 18.6 9 M1.4 13.2 C1.4 15 5.2 16.6 10 16.6 S18.6 15 18.6 13.2"/></svg>
<svg class="a" style="left:1407.6px;top:207.4px" width="20" height="18" viewBox="0 0 20 18" fill="none" stroke="#ced0d6" stroke-width="1.5" stroke-linecap="round" stroke-linejoin="round"><path d="M4 1 Q1.2 4.6 1.2 9 T4 17 M16 1 Q18.8 4.6 18.8 9 T16 17" stroke-width="1.7"/><path d="M6.6 5.4 L13.4 12.8 M13.4 5.4 L6.6 12.8" stroke-width="2"/></svg>
  <div class="a" id="status"></div>
  <div class="a" style="left:16.4px;top:844.0px;width:6.6px;height:6.6px;border:1.3px solid #5a72c8;border-radius:1.5px"></div>
<div class="t " style="left:29.5px;top:838.3px;font-size:14.5px;color:#9a9da5;line-height:20px;height:20px;transform:scaleX(0.8422);transform-origin:0 50%;">desktop-ui-lessons-python</div>
<svg class="a" style="left:201.0px;top:842.5px" width="7" height="11" viewBox="0 0 7 11"><path d="M1.2 1.2 L5.6 5.5 L1.2 9.8" fill="none" stroke="#9a9da5" stroke-width="1.3"/></svg>
<div class="t " style="left:218.2px;top:838.3px;font-size:14.5px;color:#9a9da5;line-height:20px;height:20px;transform:scaleX(0.7668);transform-origin:0 50%;">tkinter_files</div>
<svg class="a" style="left:294.5px;top:842.5px" width="7" height="11" viewBox="0 0 7 11"><path d="M1.2 1.2 L5.6 5.5 L1.2 9.8" fill="none" stroke="#9a9da5" stroke-width="1.3"/></svg>
<div class="t " style="left:310.7px;top:838.3px;font-size:14.5px;color:#9a9da5;line-height:20px;height:20px;transform:scaleX(0.7963);transform-origin:0 50%;">samples</div>
<svg class="a" style="left:370.0px;top:842.5px" width="7" height="11" viewBox="0 0 7 11"><path d="M1.2 1.2 L5.6 5.5 L1.2 9.8" fill="none" stroke="#9a9da5" stroke-width="1.3"/></svg>
<div class="t " style="left:386.7px;top:838.3px;font-size:14.5px;color:#9a9da5;line-height:20px;height:20px;transform:scaleX(0.8133);transform-origin:0 50%;">t320_progressbar</div>
<svg class="a" style="left:503.4px;top:842.5px" width="7" height="11" viewBox="0 0 7 11"><path d="M1.2 1.2 L5.6 5.5 L1.2 9.8" fill="none" stroke="#9a9da5" stroke-width="1.3"/></svg>
<svg class="a" style="left:519.0px;top:839.5px;opacity:1" width="16" height="16" viewBox="0 0 17 17"><path d="M8.3 0.8 C5.2 0.8 5 2.2 5 3.3 V5 H8.6 V5.9 H3.2 C1.6 5.9 0.8 7.2 0.8 8.7 C0.8 10.4 1.6 11.6 3.2 11.6 H4.6 V9.6 C4.6 8.3 5.6 7.4 6.9 7.4 H10 C11.2 7.4 12 6.6 12 5.4 V3.3 C12 1.8 10.8 0.8 8.3 0.8 Z" fill="#4f82e0"/><path d="M8.7 16.2 C11.8 16.2 12 14.8 12 13.7 V12 H8.4 V11.1 H13.8 C15.4 11.1 16.2 9.8 16.2 8.3 C16.2 6.6 15.4 5.4 13.8 5.4 H12.4 V7.4 C12.4 8.7 11.4 9.6 10.1 9.6 H7 C5.8 9.6 5 10.4 5 11.6 V13.7 C5 15.2 6.2 16.2 8.7 16.2 Z" fill="#f2c55c"/><circle cx="6.7" cy="3" r=".8" fill="#1e1f22"/><circle cx="10.3" cy="14" r=".8" fill="#1e1f22"/></svg>
<div class="t " style="left:540.6px;top:838.3px;font-size:14.5px;color:#9a9da5;line-height:20px;height:20px;transform:scaleX(0.8055);transform-origin:0 50%;">progressbar_01_basic.py</div>
<div class="t " style="left:897.0px;top:838.3px;font-size:14.5px;color:#9a9da5;line-height:20px;height:20px;transform:scaleX(0.7752);transform-origin:0 50%;">58:32</div>
<div class="t " style="left:948.0px;top:838.3px;font-size:14.5px;color:#9a9da5;line-height:20px;height:20px;transform:scaleX(0.7918);transform-origin:0 50%;">CRLF</div>
<div class="t " style="left:995.6px;top:838.3px;font-size:14.5px;color:#9a9da5;line-height:20px;height:20px;transform:scaleX(0.8089);transform-origin:0 50%;">UTF-8</div>
<svg class="a" style="left:1050.5px;top:839.5px" width="17" height="17" viewBox="0 0 17 17" fill="none" stroke="#9a9da5" stroke-width="1.3"><path d="M4.4 3 V2.2 Q4.4 1 5.6 1 H9.4 L12.4 4 V8 M4.4 3 H2.6 Q1.4 3 1.4 4.2 V13.6 Q1.4 14.8 2.6 14.8 H7"/><circle cx="12" cy="12.4" r="2.4"/><path d="M12 8.6 V10 M12 14.8 V16.2 M8.2 12.4 H9.6 M14.4 12.4 H15.8 M9.3 9.7 L10.3 10.7 M13.7 14.1 L14.7 15.1 M14.7 9.7 L13.7 10.7 M10.3 14.1 L9.3 15.1"/></svg>
<div class="t " style="left:1069.9px;top:838.3px;font-size:14.5px;color:#9a9da5;line-height:20px;height:20px;transform:scaleX(0.7346);transform-origin:0 50%;">4 スペース</div>
<div class="t " style="left:1141.0px;top:838.3px;font-size:14.5px;color:#9a9da5;line-height:20px;height:20px;transform:scaleX(0.8252);transform-origin:0 50%;">Python 3.13 (desktop-ui-lessons-python)</div>
<svg class="a" style="left:1404.5px;top:841.0px" width="17" height="14" viewBox="0 0 17 14" fill="none" stroke="#9a9da5" stroke-width="1.4"><rect x="1" y="5.6" width="10.6" height="7.4" rx="1.6"/><path d="M9 5.4 V3.6 Q9 1 11.8 1 Q14.6 1 14.6 3.6 V4.6"/><circle cx="6.3" cy="9.3" r=".8" fill="#9a9da5"/></svg>
  <div class="a" id="taskbar"></div>
  <svg class="a" style="left:15px;top:873.5px" width="18" height="17" viewBox="0 0 18 17"><circle cx="8" cy="8" r="7.4" fill="#f6a51e"/><circle cx="8" cy="8" r="5.2" fill="#f9c247"/><path d="M7.4 12.6 Q5.6 12.6 5.6 10.9 Q5.6 9.3 7.3 9.3 Q7.9 7.2 10.2 7.2 Q12.6 7.2 13.1 9.4 Q15.4 9.3 15.4 11 Q15.4 12.6 13.8 12.6 Z" fill="#eef1f6" stroke="#c9cfdb" stroke-width=".5"/></svg>
<div class="t " style="left:38.0px;top:870.3px;font-size:9.2px;color:#1f1f1f;line-height:12px;height:12px;font-family:'Liberation Sans','Noto Sans CJK JP',sans-serif;transform:scaleX(0.8865);transform-origin:0 50%;">32°C</div>
<div class="t " style="left:38.0px;top:881.9px;font-size:8.6px;color:#505050;line-height:12px;height:12px;font-family:'Liberation Sans','Noto Sans CJK JP',sans-serif;transform:scaleX(0.8027);transform-origin:0 50%;">晴れのちくもり</div>
<svg class="a" style="left:446.2px;top:874.4px" width="18" height="17" viewBox="0 0 18 17"><defs><linearGradient id="wlg" x1="0" y1="0" x2="1" y2="1"><stop offset="0" stop-color="#4cc6f7"/><stop offset="1" stop-color="#0c6ad8"/></linearGradient></defs><g fill="url(#wlg)"><rect x="0" y="0" width="8.5" height="8"/><rect x="9.5" y="0" width="8.5" height="8"/><rect x="0" y="9" width="8.5" height="8"/><rect x="9.5" y="9" width="8.5" height="8"/></g></svg>
<div class="a" style="left:474.0px;top:871.4px;width:163.0px;height:21.4px;background:#fbfcfd;border-radius:11px;box-shadow:0 0 0 .6px #d5dbe3"></div>
<svg class="a" style="left:481px;top:876.3px" width="12" height="12" viewBox="0 0 12 12"><circle cx="5" cy="5" r="3.8" fill="none" stroke="#222" stroke-width="1.3"/><path d="M7.8 7.8 L11 11" stroke="#222" stroke-width="1.4" stroke-linecap="round"/></svg>
<div class="t " style="left:502.0px;top:876.3px;font-size:9.4px;color:#6a6a6a;line-height:12px;height:12px;font-family:'Liberation Sans','Noto Sans CJK JP',sans-serif;transform:scaleX(1.0391);transform-origin:0 50%;">検索</div>
<svg class="a" style="left:599px;top:872.2px" width="37" height="20" viewBox="0 0 37 20"><circle cx="18.5" cy="5.5" r="3.4" fill="#f4cf7a"/><path d="M1 17 L8 9 L12 12.5 L18.5 5.5 L25 12 L29 9.5 L36 17 Z" fill="#7c8fa8"/><path d="M18.5 5.5 L21.5 9 L19 8.6 L17 9.8 L15.6 8.6 Z" fill="#f3e9ee"/><path d="M5 12.5 L8 9 L10.6 11.4 Z" fill="#e9b6c5"/><path d="M0 17 Q9 13.6 18 16 T37 16.4 V19 H0 Z" fill="#2f9c95"/><path d="M3 18.4 H34" stroke="#1d6f6a" stroke-width="1.1"/></svg>
<div class="a" style="left:652.0px;top:874.4px;width:13.6px;height:12.0px;background:#f3f4f6;border-radius:2px;box-shadow:0 0 0 .5px #b9bec6"></div>
<div class="a" style="left:647.2px;top:878.0px;width:13.2px;height:12.2px;background:#1d1e20;border-radius:2px"></div>
<div class="a" style="left:680.0px;top:872.4px;width:18.3px;height:18.0px;background:#d6301f;border-radius:2px"></div>
<svg class="a" style="left:682.6px;top:875.0px" width="13" height="13" viewBox="0 0 13 13" fill="none" stroke="#fbe9e6" stroke-width="1.3"><circle cx="7" cy="6" r="4.2"/><path d="M2 11.4 Q5.4 8 7 6 Q8.2 4 7 3.4"/></svg>
<svg class="a" style="left:713.5px;top:874.0px" width="18" height="18" viewBox="0 0 18 18"><circle cx="9" cy="9" r="8.6" fill="#e24434"/><path d="M9 9 L1.6 4.7 A8.6 8.6 0 0 0 9.2 17.6 Z" fill="#2da04e"/><path d="M9 9 L9.2 17.6 A8.6 8.6 0 0 0 16.5 4.8 Z" fill="#f6c02d"/><circle cx="9" cy="9" r="4" fill="#f1f3f6"/><circle cx="9" cy="9" r="3.1" fill="#3f7ee8"/></svg>
<div class="a" style="left:726.5px;top:870.6px;width:9.4px;height:9.4px;border-radius:50%;background:#f08a24"></div>
<svg class="a" style="left:746.6px;top:873.4px" width="19" height="18" viewBox="0 0 19 18"><rect x="7" y="1" width="11" height="8" fill="#2f56b5" stroke="#1d2a4a" stroke-width="1"/><rect x="1" y="6.6" width="11" height="8" fill="#4b7fe0" stroke="#1d2a4a" stroke-width="1"/><path d="M9 9.6 L13.4 5" stroke="#e6d24a" stroke-width="1.4"/><rect x="2.6" y="15.6" width="8" height="1.6" fill="#3a3d45"/></svg>
<div class="a" style="left:780.0px;top:872.6px;width:17.4px;height:17.6px;background:#bf1e1c;border-radius:2px"></div>
<div class="t " style="left:782.4px;top:874.6px;font-size:12.5px;color:#ffffff;line-height:14px;height:14px;font-weight:700;font-style:italic;font-family:'Liberation Sans','Noto Sans CJK JP',sans-serif;transform:scaleX(0.9359);transform-origin:0 50%;">Fz</div>
<svg class="a" style="left:811.6px;top:874.4px" width="18" height="18" viewBox="0 0 18 18"><circle cx="9" cy="9" r="8.6" fill="#e24434"/><path d="M9 9 L1.6 4.7 A8.6 8.6 0 0 0 9.2 17.6 Z" fill="#2da04e"/><path d="M9 9 L9.2 17.6 A8.6 8.6 0 0 0 16.5 4.8 Z" fill="#f6c02d"/><circle cx="9" cy="9" r="4" fill="#f1f3f6"/><circle cx="9" cy="9" r="3.1" fill="#3f7ee8"/></svg>
<svg class="a" style="left:822.6px;top:869.6px" width="15" height="11" viewBox="0 0 15 11"><path d="M3.8 10.2 Q.8 10.2 .8 7.6 Q.8 5.2 3.4 5 Q4.2 1 8 1 Q11.6 1 12.2 4.6 Q14.4 5 14.4 7.4 Q14.4 10.2 11.6 10.2 Z" fill="#58b7e6" stroke="#e9f4fb" stroke-width=".8"/></svg>
<div class="a" style="left:846.4px;top:874.0px;width:16.6px;height:17.0px;background:#0d0d0f;border-radius:3.4px"></div>
<svg class="a" style="left:849.4px;top:877.0px" width="11" height="11" viewBox="0 0 11 11"><path d="M1 2.2 L5.5 .8 L10 2.2 V6.4 L5.5 10.2 L1 6.4 Z M1 2.2 L5.5 4.6 L10 2.2 M5.5 4.6 V10" fill="none" stroke="#f2f2f2" stroke-width="1.2"/></svg>
<svg class="a" style="left:878.4px;top:874.2px" width="19" height="17" viewBox="0 0 19 17"><path d="M.6 2.2 Q.6 1 1.8 1 H6.4 L8.2 3 H17.2 Q18.4 3 18.4 4.2 V14.6 Q18.4 15.8 17.2 15.8 H1.8 Q.6 15.8 .6 14.6 Z" fill="#f5b92f"/><path d="M.6 6 H18.4 V14.6 Q18.4 15.8 17.2 15.8 H1.8 Q.6 15.8 .6 14.6 Z" fill="#fbd65e"/><rect x="5" y="11.4" width="9" height="4.4" fill="#2e8fe0"/></svg>
<div class="a" style="left:911.4px;top:874.2px;width:18.0px;height:16.2px;background:#2b2b2b;border-radius:2.4px;box-shadow:inset 0 2.6px 0 #4a4a4a"></div>
<svg class="a" style="left:914px;top:879.4px" width="13" height="9" viewBox="0 0 13 9"><path d="M1 1 L4.4 4 L1 7 M6 7.6 H11.4" fill="none" stroke="#f0f0f0" stroke-width="1.4"/></svg>
<svg class="a" style="left:943.6px;top:873.6px" width="18" height="18" viewBox="0 0 21 21"><path d="M1 3 L14 1 L20 8 L19 18 L6 20 L1 14 Z" fill="#1fd28d"/><path d="M11 12 L20 8 L19 18 L8 19.6 Z" fill="#f3e63c"/><path d="M1 3 L10 1.6 L8 12 L2 14Z" fill="#17bfe0"/><rect x="4" y="4" width="12.5" height="12.5" fill="#0b0b0b"/><rect x="5.5" y="13.6" width="4.6" height="1" fill="#fff"/><path d="M5.6 10.4 V6 H7.4 Q8.8 6 8.8 7.3 Q8.8 8.6 7.4 8.6 H5.8 M13 6.6 Q12.4 6 11.6 6 Q10 6 10 8.2 Q10 10.4 11.6 10.4 Q12.4 10.4 13 9.8" fill="none" stroke="#fff" stroke-width="1"/></svg>
<div class="a" style="left:971.8px;top:866.6px;width:28.6px;height:30.8px;background:rgba(255,255,255,.72);border-radius:4px;box-shadow:0 0 0 .6px #d0d7e0"></div>
<div class="a" style="left:979.4px;top:873.4px;width:16.6px;height:13.6px;background:#39495a;border-radius:1.6px;box-shadow:inset 0 2.4px 0 #7f95ad"></div>
<svg class="a" style="left:984.4px;top:878.4px" width="13" height="13" viewBox="0 0 17 17"><path d="M8.3 0.8 C5.2 0.8 5 2.2 5 3.3 V5 H8.6 V5.9 H3.2 C1.6 5.9 0.8 7.2 0.8 8.7 C0.8 10.4 1.6 11.6 3.2 11.6 H4.6 V9.6 C4.6 8.3 5.6 7.4 6.9 7.4 H10 C11.2 7.4 12 6.6 12 5.4 V3.3 C12 1.8 10.8 0.8 8.3 0.8 Z" fill="#4f82e0"/><path d="M8.7 16.2 C11.8 16.2 12 14.8 12 13.7 V12 H8.4 V11.1 H13.8 C15.4 11.1 16.2 9.8 16.2 8.3 C16.2 6.6 15.4 5.4 13.8 5.4 H12.4 V7.4 C12.4 8.7 11.4 9.6 10.1 9.6 H7 C5.8 9.6 5 10.4 5 11.6 V13.7 C5 15.2 6.2 16.2 8.7 16.2 Z" fill="#f2d04c"/></svg>
<div class="a" style="left:980.8px;top:893.6px;width:11.8px;height:2.0px;background:#1466d8;border-radius:1px"></div>
<div class="a" style="left:720.3px;top:894.2px;width:4.4px;height:1.4px;background:#8d939c;border-radius:1px"></div>
<div class="a" style="left:753.5px;top:894.2px;width:4.4px;height:1.4px;background:#8d939c;border-radius:1px"></div>
<div class="a" style="left:786.4px;top:894.2px;width:4.4px;height:1.4px;background:#8d939c;border-radius:1px"></div>
<div class="a" style="left:819.1px;top:894.2px;width:4.4px;height:1.4px;background:#8d939c;border-radius:1px"></div>
<div class="a" style="left:852.4px;top:894.2px;width:4.4px;height:1.4px;background:#8d939c;border-radius:1px"></div>
<div class="a" style="left:885.2px;top:894.2px;width:4.4px;height:1.4px;background:#8d939c;border-radius:1px"></div>
<div class="a" style="left:918.2px;top:894.2px;width:4.4px;height:1.4px;background:#8d939c;border-radius:1px"></div>
<div class="a" style="left:950.2px;top:894.2px;width:4.4px;height:1.4px;background:#8d939c;border-radius:1px"></div>
<svg class="a" style="left:1143.6px;top:879.4px" width="10" height="6" viewBox="0 0 10 6"><path d="M1 5 L5 1.2 L9 5" fill="none" stroke="#2a2a2a" stroke-width="1.2"/></svg>
<svg class="a" style="left:1165.6px;top:877.6px" width="14" height="10" viewBox="0 0 14 10"><path d="M3.6 9.2 Q.8 9.2 .8 6.8 Q.8 4.8 3 4.4 Q3.8 1 7 1 Q10.2 1 10.8 4 Q13.2 4.2 13.2 6.6 Q13.2 9.2 10.6 9.2 Z" fill="none" stroke="#2a2a2a" stroke-width="1.2"/></svg>
<svg class="a" style="left:1189.6px;top:875.4px" width="14" height="14" viewBox="0 0 14 14"><path d="M4 1 L7 3 L10 1 L13 3 L10 5 L13 7 L10 9 L7 7 L4 9 L1 7 L4 5 L1 3 Z" fill="#1f1f1f"/><rect x=".6" y="7" width="6.4" height="6.4" fill="#d8232f"/><path d="M3 8.6 V12 M3 8.6 L4.8 10.8 H2" stroke="#fff" stroke-width=".8" fill="none"/></svg>
<svg class="a" style="left:1215px;top:874.6px" width="10" height="14" viewBox="0 0 10 14"><rect x="3" y=".8" width="4" height="8" rx="2" fill="#2f7fe0" stroke="#1f63c4" stroke-width=".8"/><path d="M1.2 6.6 Q1.2 10.4 5 10.4 Q8.8 10.4 8.8 6.6 M5 10.4 V13" fill="none" stroke="#1f63c4" stroke-width="1.1"/></svg>
<svg class="a" style="left:1236.6px;top:876.0px" width="14" height="12" viewBox="0 0 14 12"><rect x="1" y="2" width="12" height="9" rx="1" fill="#dbe9fa" stroke="#2a6fc9" stroke-width="1.1"/><path d="M3.6 1 V5 M1.6 3 H5.6 M9 5 L10.4 6.4 M10.4 5 L9 6.4" stroke="#2a6fc9" stroke-width="1"/></svg>
<div class="a" style="left:1265.0px;top:876.0px;width:6.6px;height:11.4px;background:#d0d6df;border-radius:1.4px"></div>
<div class="a" style="left:1290.4px;top:876.0px;width:12px;height:12px;border-radius:50%;background:radial-gradient(circle at 40% 40%,#3f8fe8,#1a55b8)"></div>
<div class="a" style="left:1298.4px;top:883.6px;width:5px;height:5px;border-radius:50%;background:#f0a030"></div>
<svg class="a" style="left:1319.6px;top:878.0px" width="11" height="9" viewBox="0 0 11 9"><path d="M.8 3 Q5.5 -1.4 10.2 3 M2.6 5 Q5.5 2.2 8.4 5" fill="none" stroke="#2a2a2a" stroke-width="1.1"/><circle cx="5.5" cy="7.2" r="1.1" fill="#2a2a2a"/></svg>
<svg class="a" style="left:1336.6px;top:877.0px" width="14" height="11" viewBox="0 0 14 11"><path d="M1 4 H3.4 L6.4 1.4 V9.6 L3.4 7 H1 Z" fill="none" stroke="#2a2a2a" stroke-width="1.1"/><path d="M8.2 3.6 Q9.4 5.5 8.2 7.4 M10 2.2 Q12 5.5 10 8.8 M11.8 1 Q14.4 5.5 11.8 10" fill="none" stroke="#2a2a2a" stroke-width="1"/></svg>
<svg class="a" style="left:1354.6px;top:875.6px" width="13" height="13" viewBox="0 0 13 13"><rect x="1" y="1.6" width="9.4" height="7" fill="none" stroke="#2a2a2a" stroke-width="1.2"/><path d="M2.4 5.4 H8.4 M3.4 10.4 H8" stroke="#2a2a2a" stroke-width="1.1"/><path d="M7.6 8.4 H12.4 L10 11.6 Z" fill="#2a2a2a"/></svg>
<div class="t " style="left:1405.6px;top:870.5px;font-size:9.2px;color:#2a2a2a;line-height:12px;height:12px;font-family:'Liberation Sans','Noto Sans CJK JP',sans-serif;transform:scaleX(0.9053);transform-origin:0 50%;">11:09</div>
<div class="t " style="left:1380.4px;top:881.8px;font-size:9.2px;color:#2a2a2a;line-height:12px;height:12px;font-family:'Liberation Sans','Noto Sans CJK JP',sans-serif;transform:scaleX(0.9873);transform-origin:0 50%;">2025/08/23</div>
  <div class="a" id="tkwin" style="left:62.3px;top:136.8px;width:300.4px;height:285.5px;background:#f0f0f0;border-radius:6.5px;box-shadow:0 0 0 .7px rgba(110,110,110,.55),0 3px 12px rgba(0,0,0,.45);overflow:hidden">
<div class="a" style="left:0.0px;top:0.0px;width:300.4px;height:23.2px;background:#f1f3f6"></div>
<svg class="a" style="left:7.9px;top:4.2px" width="9" height="14" viewBox="0 0 9 14"><path d="M1.2 13 Q1.6 8 3 5.4 Q5 1.6 8 .8 Q8.4 4 6.6 6.8 Q5 9.4 2.4 10.4" fill="#3b6fb8" stroke="#2b4f86" stroke-width=".8"/><path d="M1.2 13 Q3 7.6 6.8 2.6" stroke="#dce8f7" stroke-width=".7" fill="none"/></svg>
<div class="t " style="left:22.7px;top:6.0px;font-size:9.4px;color:#2a2a2a;line-height:12px;height:12px;font-family:'Liberation Sans','Noto Sans CJK JP',sans-serif;transform:scaleX(0.9319);transform-origin:0 50%;">ttk.Progressbar Sample</div>
<div class="a" style="left:211.1px;top:11.2px;width:6.8px;height:1.0px;background:#444"></div>
<svg class="a" style="left:278.7px;top:6.8px" width="9" height="9" viewBox="0 0 9 9"><path d="M.8 .8 L8.2 8.2 M8.2 .8 L.8 8.2" stroke="#222" stroke-width="1.1"/></svg>
<div class="a" style="left:244.3px;top:7.8px;width:6.8px;height:6.8px;border:1px solid #d9dbde;box-sizing:border-box"></div>
<div class="t " style="left:21.7px;top:37.4px;font-size:8.8px;color:#1c1c1c;line-height:12px;height:12px;font-family:'Liberation Sans','Noto Sans CJK JP',sans-serif;transform:scaleX(0.8523);transform-origin:0 50%;">確定的モード</div>
<div class="a" style="left:37.7px;top:62.4px;width:224.4px;height:15.4px;background:#e8e8e8;border:1px solid #dcdcdc;border-top-color:#c9c9c9;box-sizing:border-box"></div>
<div class="a" style="left:39.5px;top:64.4px;width:153.8px;height:11.8px;background:#06b025"></div>
<div class="a" style="left:29.1px;top:91.2px;width:53.4px;height:16.8px;background:#fdfdfd;border:1px solid #dedede;border-bottom-color:#cfcfcf;border-radius:3px;box-sizing:border-box"></div><div class="t " style="left:33.1px;top:93.8px;font-size:8.8px;color:#1c1c1c;line-height:12px;height:12px;font-family:'Liberation Sans','Noto Sans CJK JP',sans-serif;transform:scaleX(0.9169);transform-origin:0 50%;">進める (+10)</div>
<div class="a" style="left:93.5px;top:91.2px;width:54.4px;height:16.8px;background:#fdfdfd;border:1px solid #dedede;border-bottom-color:#cfcfcf;border-radius:3px;box-sizing:border-box"></div><div class="t " style="left:107.7px;top:93.8px;font-size:8.8px;color:#1c1c1c;line-height:12px;height:12px;font-family:'Liberation Sans','Noto Sans CJK JP',sans-serif;transform:scaleX(0.7386);transform-origin:0 50%;">リセット</div>
<div class="t " style="left:21.7px;top:139.8px;font-size:8.8px;color:#1c1c1c;line-height:12px;height:12px;font-family:'Liberation Sans','Noto Sans CJK JP',sans-serif;transform:scaleX(0.8848);transform-origin:0 50%;">不確定的モード</div>
<div class="a" style="left:37.7px;top:163.6px;width:224.4px;height:16.6px;background:#e8e8e8;border:1px solid #dcdcdc;border-top-color:#c9c9c9;box-sizing:border-box"></div>
<div class="a" style="left:39.5px;top:165.8px;width:12.4px;height:12.2px;background:#06b025"></div>
<div class="a" style="left:29.1px;top:193.0px;width:53.0px;height:16.4px;background:#fdfdfd;border:1px solid #dedede;border-bottom-color:#cfcfcf;border-radius:3px;box-sizing:border-box"></div><div class="t " style="left:46.9px;top:195.4px;font-size:8.8px;color:#1c1c1c;line-height:12px;height:12px;font-family:'Liberation Sans','Noto Sans CJK JP',sans-serif;transform:scaleX(0.9938);transform-origin:0 50%;">開始</div>
<div class="a" style="left:94.3px;top:193.0px;width:53.0px;height:16.4px;background:#fdfdfd;border:1px solid #dedede;border-bottom-color:#cfcfcf;border-radius:3px;box-sizing:border-box"></div><div class="a" style="left:95.9px;top:194.6px;width:49.8px;height:13.2px;border:1px dotted #555;box-sizing:border-box"></div><div class="t " style="left:112.0px;top:195.4px;font-size:8.8px;color:#1c1c1c;line-height:12px;height:12px;font-family:'Liberation Sans','Noto Sans CJK JP',sans-serif;transform:scaleX(0.9938);transform-origin:0 50%;">停止</div>
</div>
  <svg class="a" style="left:0;top:0" width="1440" height="900" viewBox="0 90 1440 900">
<path d="M263.4 309.8 C258 311, 251.5 309.6, 248.6 303.6 C245.4 296.6, 247.2 285.2, 252.4 279.6 C255.4 276.4, 259.4 276.6, 260.6 280 C262.2 285, 263.6 291.6, 263.8 297.6" fill="none" stroke="#e8192c" stroke-width="2" stroke-linecap="round" stroke-linejoin="round"/>
<path d="M432.4 628.2 C422.6 629.4, 411 628.4, 406.8 620 C403.2 612.4, 407.6 602.2, 416 599.6 C422 597.8, 427.6 599.6, 428.8 604.4 C430 609.4, 430.8 613.4, 431.2 617.4" fill="none" stroke="#e8192c" stroke-width="2.1" stroke-linecap="round" stroke-linejoin="round"/>
<path d="M558.4 600.8 C563 595.4, 570 591.6, 582 590 C598 588, 614 591.6, 628 597 C644 603.4, 658 611.6, 674 617" fill="none" stroke="#e8192c" stroke-width="2.1" stroke-linecap="round" stroke-linejoin="round"/>
<path d="M592.8 630.6 C650 632.6, 740 632.4, 801.4 630.8" fill="none" stroke="#e8192c" stroke-width="2.1" stroke-linecap="round" stroke-linejoin="round"/>
<path d="M608.8 681.2 C630 684.4, 660 687.6, 690 688.2 C706 688.4, 718 687.6, 724 686 C730 684.4, 734.6 682.2, 737.2 679.2" fill="none" stroke="#e8192c" stroke-width="2.1" stroke-linecap="round" stroke-linejoin="round"/>
<path d="M755.6 682.2 L764.8 682.2" fill="none" stroke="#e8192c" stroke-width="2.1" stroke-linecap="round" stroke-linejoin="round"/>
</svg>
</div>
<svg class="a" style="left:1443px;top:405.7px" width="477" height="268" viewBox="12 22 1839 1033" preserveAspectRatio="none">
<defs>
<filter id="bl" x="-5%" y="-5%" width="110%" height="110%"><feGaussianBlur stdDeviation="2.2"/></filter>
<filter id="bl2" x="-10%" y="-10%" width="120%" height="120%"><feGaussianBlur stdDeviation="7"/></filter>
<linearGradient id="ceil" x1="0" y1="0" x2="1" y2="0"><stop offset="0" stop-color="#dadedd"/><stop offset=".5" stop-color="#e0e4e3"/><stop offset="1" stop-color="#e5e8e7"/></linearGradient>
<linearGradient id="bulk" x1="0" y1="0" x2="1" y2="0"><stop offset="0" stop-color="#eeeeef"/><stop offset=".5" stop-color="#e6e7e7"/><stop offset="1" stop-color="#d0d3d1"/></linearGradient>
<linearGradient id="cshadow" x1="0" y1="0" x2="1" y2="0"><stop offset="0" stop-color="#b4b6b4" stop-opacity="0"/><stop offset="1" stop-color="#c6c8c8" stop-opacity=".65"/></linearGradient>
<linearGradient id="lwall" x1="0" y1="0" x2="0" y2="1"><stop offset="0" stop-color="#ebebed"/><stop offset=".6" stop-color="#e8e8ea"/><stop offset="1" stop-color="#dcdcdf"/></linearGradient>
<linearGradient id="bwall" x1="0" y1="0" x2="0" y2="1"><stop offset="0" stop-color="#efeff0"/><stop offset="1" stop-color="#ebebec"/></linearGradient>
<linearGradient id="door" x1="0" y1="0" x2="1" y2="0"><stop offset="0" stop-color="#ece4d8"/><stop offset=".5" stop-color="#f0e9de"/><stop offset="1" stop-color="#eee7dc"/></linearGradient>
<linearGradient id="face" x1="0" y1="0" x2="0" y2="1"><stop offset="0" stop-color="#c9a48f"/><stop offset=".55" stop-color="#c39a86"/><stop offset=".8" stop-color="#ae9990"/><stop offset="1" stop-color="#a39690"/></linearGradient>
<linearGradient id="nm" x1="0" y1="0" x2="0" y2="1"><stop offset="0" stop-color="#000" stop-opacity="0"/><stop offset="1" stop-color="#000" stop-opacity=".12"/></linearGradient>
<linearGradient id="nm2" x1="0" y1="0" x2="0" y2="1"><stop offset="0" stop-color="#000" stop-opacity="0"/><stop offset="1" stop-color="#000" stop-opacity=".27"/></linearGradient>
<linearGradient id="nmh" x1="0" y1="0" x2="1" y2="0"><stop offset="0" stop-color="#fff"/><stop offset=".6" stop-color="#fff"/><stop offset="1" stop-color="#000"/></linearGradient>
<mask id="nmm"><rect x="12" y="900" width="520" height="160" fill="url(#nmh)"/></mask>
<clipPath id="vc"><rect x="12" y="22" width="1839" height="1033"/></clipPath>
</defs>
<g clip-path="url(#vc)"><g filter="url(#bl)">
<rect x="0" y="0" width="1900" height="1100" fill="url(#bwall)"/>
<path d="M238 10 H1900 V273 L342 222 L342 207 Z" fill="url(#ceil)"/>
<path d="M0 10 H238 L342 207 L328 231 L0 236 Z" fill="url(#bulk)"/>
<path d="M0 236 L328 231 L120 1070 H0 Z" fill="url(#lwall)"/>
<path d="M328 231 L120 1070 H60 L290 231 Z" fill="url(#cshadow)"/>
<path d="M593 287 L1622 315 L1822 1075 H480 Z" fill="#ddd6ca"/>
<path d="M593 287 L630 300 L520 1075 H484 Z" fill="#e6e5e0"/>
<path d="M593 287 L484 1075" stroke="#c2c2bd" stroke-width="5"/>
<path d="M626 338 L1585 350 L1778 1075 H516 Z" fill="url(#door)"/>
<path d="M626 340 L1120 346" stroke="#a9a195" stroke-width="6"/>
<path d="M1120 344 V900" stroke="#cfc6b8" stroke-width="8"/>
<path d="M1585 350 L1778 1075" stroke="#e6e1d6" stroke-width="7"/>
<path d="M1622 315 L1822 1075" stroke="#c6c0b4" stroke-width="5"/>
<path d="M500 1075 L545 1005 L624 918 L771 868 L820 835 L848 808 L1079 820 L1130 850 L1212 889 L1366 925 L1420 985 L1462 1075 Z" fill="#692839"/>
<path d="M771 868 L848 808 L858 935 L862 1075 H815 L800 960 Z" fill="#4f1c2b"/>
<path d="M1079 820 L1130 850 L1180 940 L1135 1075 H1084 Z" fill="#4f1c2b"/>
<path d="M624 918 L771 868 L800 960 L720 1075 H560 Z" fill="#71303f" opacity=".6"/>
<path d="M855 930 Q965 965 1083 922 V1075 H860 Z" fill="#5f666b"/>
<path d="M862 800 H1076 L1083 922 Q965 965 855 930 Z" fill="#b08e7c"/>
<path d="M862 830 Q965 900 1076 830 L1079 900 Q965 945 858 905 Z" fill="#9b8b84" opacity=".7"/>
<path d="M772 600 Q760 470 830 400 Q900 350 965 352 Q1040 352 1095 405 Q1135 470 1122 600 L1100 560 Q1100 470 1040 450 Q960 430 880 452 Q820 480 815 560 Z" fill="#626368"/>
<path d="M820 470 Q850 380 965 365 Q1070 375 1100 470 Q1040 440 965 440 Q880 440 820 470 Z" fill="#3d3e43"/>
<path d="M806 570 Q806 452 960 446 Q1112 452 1116 570 L1108 720 Q1090 840 975 900 Q860 860 826 730 Z" fill="url(#face)"/>
<path d="M850 470 Q960 430 1075 470 Q1040 505 960 500 Q880 505 850 470 Z" fill="#d4b09b" opacity=".8"/>
<path d="M838 740 Q880 790 965 740 Q1050 790 1098 740 Q1085 850 975 900 Q870 860 838 740 Z" fill="#a99b95" opacity=".8"/>
<ellipse cx="968" cy="768" rx="52" ry="15" fill="#8c5a55"/>
<path d="M945 640 Q940 690 935 700 Q965 722 998 700 Q990 690 985 640 Z" fill="#b58a77"/>
<ellipse cx="966" cy="708" rx="30" ry="9" fill="#8f6a5c"/>
<rect x="812" y="574" width="148" height="82" rx="36" fill="#b59386" fill-opacity=".3" stroke="#3a2f30" stroke-width="5"/>
<rect x="994" y="572" width="122" height="82" rx="36" fill="#b59386" fill-opacity=".3" stroke="#3a2f30" stroke-width="5"/>
<path d="M960 600 Q977 590 994 600" stroke="#3a2f30" stroke-width="5" fill="none"/>
<ellipse cx="885" cy="612" rx="28" ry="9" fill="#3a2d2a"/><ellipse cx="1050" cy="610" rx="26" ry="9" fill="#3a2d2a"/>
<path d="M826 560 Q880 536 945 556 M1000 556 Q1050 536 1108 556" stroke="#5e5352" stroke-width="9" fill="none"/>
<path d="M712 560 Q716 358 960 350 Q1204 358 1204 560" fill="none" stroke="#17181c" stroke-width="16"/>
<path d="M746 548 Q756 396 960 388 Q1164 396 1172 548" fill="none" stroke="#24252a" stroke-width="12"/>
<rect x="700" y="500" width="30" height="70" rx="6" fill="#17181c"/><rect x="1186" y="500" width="30" height="70" rx="6" fill="#17181c"/>
<ellipse cx="753" cy="655" rx="60" ry="102" fill="#1b1c21"/>
<ellipse cx="1170" cy="652" rx="60" ry="105" fill="#1b1c21"/>
<ellipse cx="778" cy="658" rx="32" ry="86" fill="#2c2e34"/>
<ellipse cx="1146" cy="655" rx="32" ry="88" fill="#2c2e34"/>
<path d="M700 665 V705 M1224 660 V700" stroke="#3b57c9" stroke-width="6"/>
<path d="M1182 708 L1090 786" stroke="#a9abb3" stroke-width="11" stroke-linecap="round"/>
<ellipse cx="1040" cy="830" rx="38" ry="31" fill="#17171a" transform="rotate(-32 1040 830)"/>
<path d="M1171 730 Q1158 900 1163 1075" fill="none" stroke="#1a1a1d" stroke-width="6"/>
<rect x="1164" y="730" width="13" height="66" rx="4" fill="#1a1a1d"/>
<path d="M12 1010 L80 990 L128 1000 L112 1060 H12 Z" fill="#6a6c6a"/><path d="M20 1022 H100 M20 1036 H96" stroke="#9a9c9a" stroke-width="6"/>
</g>
<rect x="12" y="920" width="1839" height="140" fill="url(#nm)"/>
<rect x="12" y="920" width="520" height="140" fill="url(#nm2)" mask="url(#nmm)"/>
<text x="63" y="1014" font-family="'Liberation Sans','Noto Sans CJK JP',sans-serif" font-size="68" fill="#ffffff" textLength="270" lengthAdjust="spacingAndGlyphs">小川慶一</text>
</g></svg>
</body>
</html>
